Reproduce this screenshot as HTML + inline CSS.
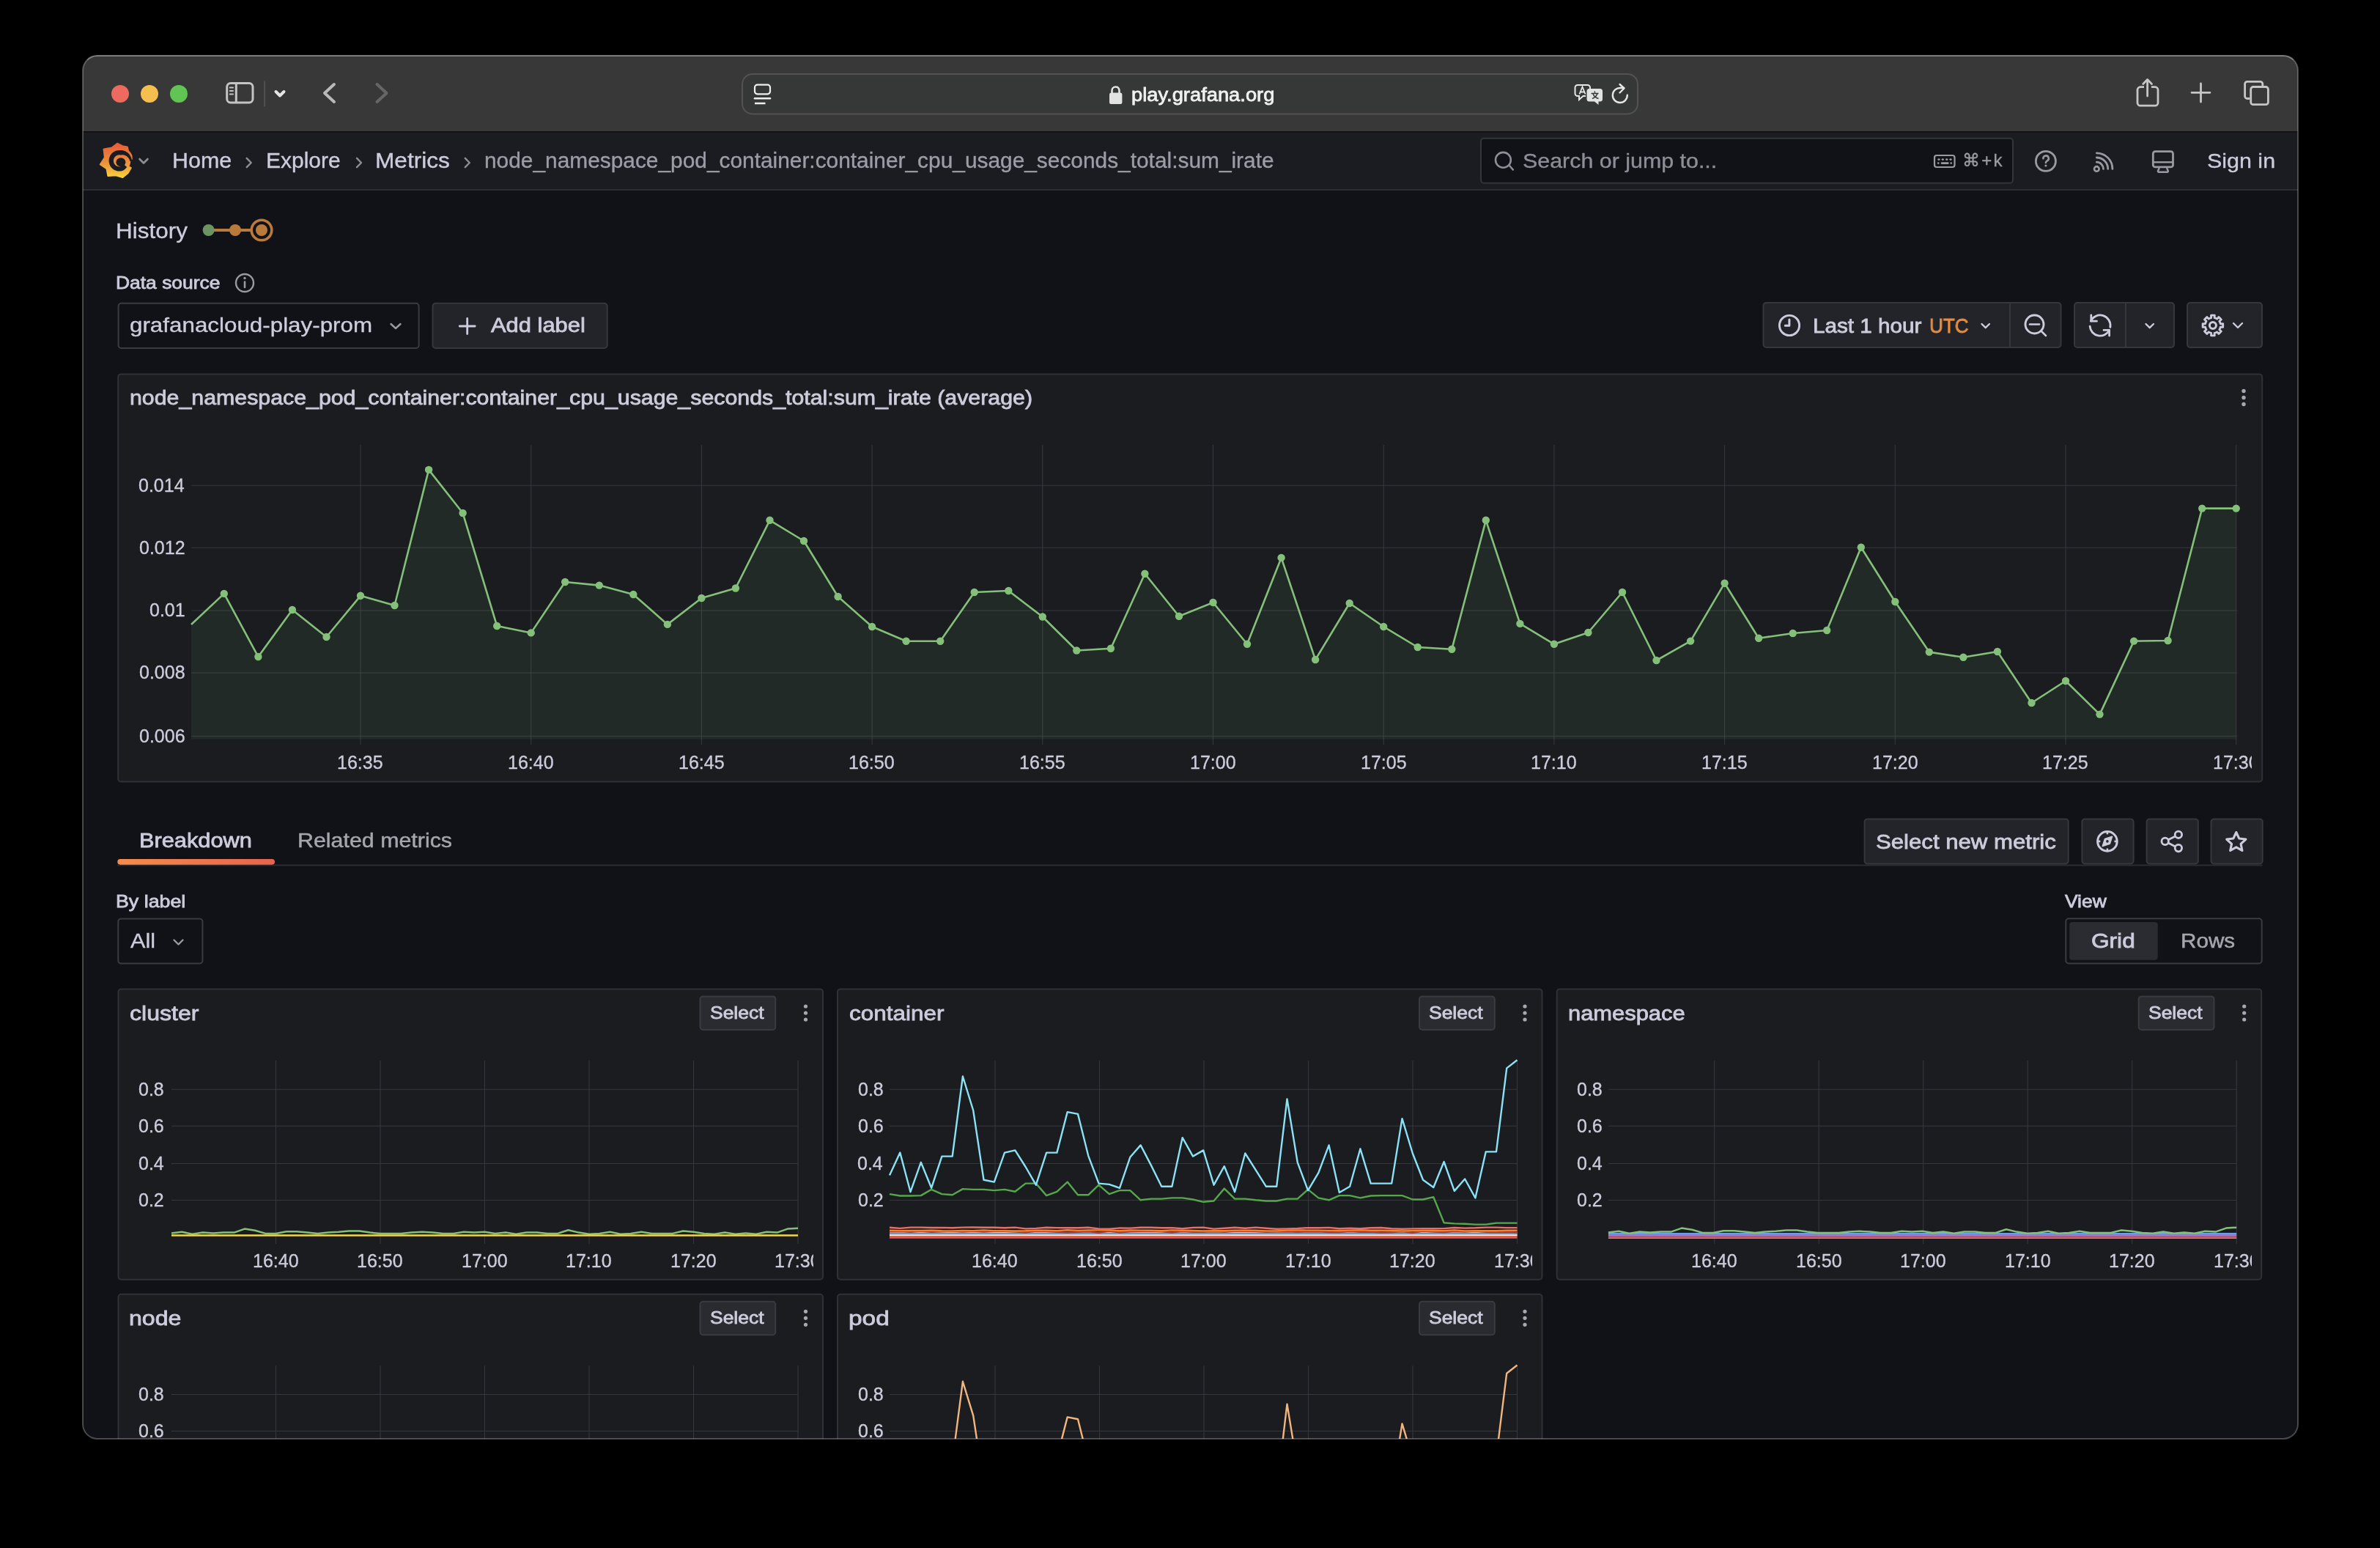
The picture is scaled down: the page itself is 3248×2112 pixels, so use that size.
<!DOCTYPE html><html><head><meta charset="utf-8"><title>Grafana</title><style>*{margin:0;padding:0;box-sizing:border-box}
html,body{width:3248px;height:2112px;background:#000;overflow:hidden;font-family:"Liberation Sans",sans-serif}
.a{position:absolute}
.t{position:absolute;white-space:nowrap;line-height:1;will-change:transform}
#win{position:absolute;left:113px;top:76px;width:3023px;height:1887px;border-radius:20px;overflow:hidden;background:#111217}
#inner{position:absolute;left:-113px;top:-76px;width:3248px;height:2112px}
</style></head><body><div id="win"><div id="inner"><div class="a" style="left:113.00px;top:76.00px;width:3023.00px;height:104.00px;background:#383838;"></div><div class="a" style="left:113.00px;top:179.30px;width:3023.00px;height:1.70px;background:#121212;"></div><div class="a" style="left:152px;top:116px;width:24px;height:24px;border-radius:50%;background:#ec6a5e"></div><div class="a" style="left:192px;top:116px;width:24px;height:24px;border-radius:50%;background:#f4bf4f"></div><div class="a" style="left:232px;top:116px;width:24px;height:24px;border-radius:50%;background:#61c554"></div><svg class="a" style="left:0;top:0" width="3248" height="200"><rect x="309.7" y="113.5" width="35.3" height="26.5" rx="5" fill="none" stroke-linecap="round" stroke-linejoin="round" stroke="#c4c4c4" stroke-width="3"/><line x1="322.3" y1="114" x2="322.3" y2="139.5" stroke="#c4c4c4" stroke-width="3"/><line x1="313.8" y1="119.4" x2="318" y2="119.4" stroke="#c4c4c4" stroke-width="2" stroke-linecap="round"/><line x1="313.8" y1="124" x2="318" y2="124" stroke="#c4c4c4" stroke-width="2" stroke-linecap="round"/><line x1="313.8" y1="128.5" x2="318" y2="128.5" stroke="#c4c4c4" stroke-width="2" stroke-linecap="round"/><line x1="361.1" y1="110.3" x2="361.1" y2="145.5" stroke="#505050" stroke-width="2"/><polyline points="376.5,125 382,130.5 387.5,125" fill="none" stroke-linecap="round" stroke-linejoin="round" stroke="#e6e6e6" stroke-width="4"/><polyline points="456,115 443,127 456,139" fill="none" stroke-linecap="round" stroke-linejoin="round" stroke="#b9b9b9" stroke-width="4"/><polyline points="514.5,115 527.5,127 514.5,139" fill="none" stroke-linecap="round" stroke-linejoin="round" stroke="#666666" stroke-width="4"/><rect x="1013" y="101" width="1222" height="54.5" rx="14" fill="#363737" stroke="#535353" stroke-width="2"/><rect x="1030" y="115.7" width="21" height="12.6" rx="3.5" fill="none" stroke-linecap="round" stroke-linejoin="round" stroke="#eeeeee" stroke-width="2.2"/><line x1="1030" y1="134.3" x2="1051" y2="134.3" stroke="#eeeeee" stroke-width="2.6" stroke-linecap="round"/><line x1="1030" y1="141" x2="1044.5" y2="141" stroke="#eeeeee" stroke-width="2.6" stroke-linecap="butt"/><path d="M1517.5 127.5 v-4 a5 5 0 0 1 10 0 v4" fill="none" stroke="#e2e2e2" stroke-width="2.6"/><rect x="1514" y="126.5" width="17.4" height="15.5" rx="2.5" fill="#e2e2e2"/><path d="M2153 116 h13.5 a3.5 3.5 0 0 1 3.5 3.5 v3 M2164 131 h-3.5 l-5.5 5 v-5 h-2 a3.5 3.5 0 0 1 -3.5 -3.5 v-8 a3.5 3.5 0 0 1 3.5 -3.5" fill="none" stroke="#e6e6e6" stroke-width="2"/><path d="M2155.5 128.5 l4 -10 l4 10 M2156.8 125.5 h5.5" fill="none" stroke="#e6e6e6" stroke-width="1.8"/><path d="M2169 121 h14.5 a3.5 3.5 0 0 1 3.5 3.5 v10.5 a3.5 3.5 0 0 1 -3.5 3.5 h-2 v4.5 l-5.5 -4.5 h-7 a3.5 3.5 0 0 1 -3.5 -3.5 v-10.5 a3.5 3.5 0 0 1 3.5 -3.5z" fill="#e2e2e2"/><path d="M2171.5 127.5 h10 M2176 124.5 l0.8 2 M2173 134.5 c3 -1 6 -4 7 -7 M2174 128 c1 3 4 5.5 7.5 6.5" fill="none" stroke="#363737" stroke-width="1.5"/><path d="M2220.8 129.8 a10 10 0 1 1 -9.2 -9.8 h4.5" fill="none" stroke="#e6e6e6" stroke-width="2.4" stroke-linecap="round"/><polyline points="2210.5,115 2216.5,120.5 2210.5,126.5" fill="none" stroke="#e6e6e6" stroke-width="2.4" stroke-linecap="round" stroke-linejoin="round"/><path d="M2926 118.7 h-5 a4 4 0 0 0 -4 4 v17.5 a4 4 0 0 0 4 4 h20 a4 4 0 0 0 4 -4 v-17.5 a4 4 0 0 0 -4 -4 h-5" fill="none" stroke="#c6c6c6" stroke-width="2.8"/><path d="M2930.6 131 v-22 M2924.7 114.5 l5.9 -6 l5.9 6" fill="none" stroke="#c6c6c6" stroke-width="2.8" stroke-linecap="round" stroke-linejoin="round"/><path d="M3003.5 114 v25 M2991 126.3 h25" fill="none" stroke="#c6c6c6" stroke-width="2.8" stroke-linecap="round"/><path d="M3070.4 134.5 h-3.5 a3.3 3.3 0 0 1 -3.3 -3.3 v-16.6 a3.3 3.3 0 0 1 3.3 -3.3 h17.6 a3.3 3.3 0 0 1 3.3 3.3 v3.5" fill="none" stroke="#c6c6c6" stroke-width="2.8"/><rect x="3071.7" y="118.5" width="23.7" height="24.2" rx="3.3" fill="none" stroke="#c6c6c6" stroke-width="2.8"/></svg><div class="t" style="left:1543.55px;top:115.77px;font-size:26.5px;color:#f0f0f0;transform:scaleX(1.0306);transform-origin:0 0;-webkit-text-stroke:0.8px #f0f0f0;">play.grafana.org</div><div class="a" style="left:113.00px;top:181.00px;width:3023.00px;height:77.00px;background:#1b1c21;"></div><div class="a" style="left:113.00px;top:257.80px;width:3023.00px;height:1.80px;background:#2c2d32;"></div><svg class="a" style="left:0;top:0" width="3248" height="270"><defs><linearGradient id="glg" x1="0" y1="0" x2="0" y2="1"><stop offset="0" stop-color="#e85c38"/><stop offset="0.55" stop-color="#eb8f3a"/><stop offset="1" stop-color="#f6d03f"/></linearGradient></defs><path d="M178.55 229.17 L174.38 236.04 L167.31 241.82 L158.36 239.09 L147.50 239.80 L145.69 230.06 L136.98 224.31 L143.10 214.83 L141.71 203.69 L152.69 201.76 L160.12 195.89 L167.02 199.42 L173.70 200.76 L174.86 206.12 L177.34 208.89 L179.19 212.12 L179.64 216.35 L179.44 217.85 L177.10 219.30 L176.88 221.77 L176.24 224.16 L175.20 226.40 L175.90 227.74 Z" fill="url(#glg)" stroke="url(#glg)" stroke-width="2.4" stroke-linejoin="round"/><path d="M173.09 227.85 L172.70 228.44 L172.28 229.01 L171.82 229.56 L171.33 230.10 L170.82 230.60 L170.27 231.09 L169.69 231.54 L169.08 231.97 L168.45 232.37 L167.79 232.74 L167.08 232.98 L166.36 233.18 L165.63 233.34 L164.89 233.46 L164.15 233.55 L163.40 233.59 L162.65 233.60 L161.90 233.57 L161.16 233.49 L160.42 233.38 L159.68 233.23 L158.96 233.05 L158.24 232.82 L157.54 232.56 L156.86 232.26 L156.19 231.93 L155.53 231.56 L154.90 231.16 L154.29 230.72 L153.71 230.25 L153.15 229.76 L152.61 229.23 L152.11 228.68 L151.63 228.10 L151.19 227.50 L150.77 226.88 L150.39 226.23 L150.05 225.57 L149.74 224.89 L149.46 224.19 L149.22 223.48 L149.02 222.76 L148.86 222.03 L148.74 221.29 L148.65 220.55 L148.61 219.80 L148.60 219.05 L148.63 218.30 L148.71 217.56 L148.82 216.82 L148.97 216.08 L149.15 215.36 L149.38 214.64 L149.64 213.94 L149.94 213.26 L150.27 212.59 L150.64 211.93 L151.04 211.30 L151.48 210.69 L151.95 210.11 L152.44 209.55 L152.97 209.01 L153.52 208.51 L154.10 208.03 L154.70 207.59 L155.32 207.17 L155.97 206.79 L156.63 206.45 L157.31 206.14 L158.01 205.86 L158.72 205.62 L159.44 205.42 L160.17 205.26 L160.91 205.14 L161.65 205.05 L162.40 205.01 L163.15 204.97 L163.91 204.91 L164.67 204.89 L165.44 204.91 L166.21 204.97 L166.98 205.07 L167.75 205.22 L168.51 205.40 L169.27 205.63 L170.02 205.90 L170.76 206.21 L171.49 206.56 L172.20 206.96 L172.90 207.39 L173.57 207.86 L174.22 208.37 L174.85 208.91 L175.45 209.50 L176.02 210.11 L176.56 210.76 L177.07 211.44 L177.55 212.15 L177.99 212.89 L178.39 213.66 L178.76 214.45 L179.08 215.27 L179.36 216.10 L179.60 216.95 L179.79 217.82 L181.85 217.97 L181.89 219.96 L176.99 219.79 L176.85 218.08 L176.51 217.39 L176.14 216.73 L175.74 216.10 L175.30 215.51 L174.85 214.95 L174.37 214.43 L173.87 213.95 L173.35 213.51 L172.81 213.11 L172.26 212.74 L171.70 212.42 L171.14 212.14 L170.57 211.90 L169.99 211.69 L169.42 211.53 L168.85 211.40 L168.28 211.32 L167.73 211.27 L167.18 211.25 L166.64 211.27 L166.12 211.33 L165.62 211.41 L165.13 211.53 L164.70 211.51 L164.29 211.42 L163.87 211.36 L163.46 211.32 L163.04 211.30 L162.62 211.30 L162.20 211.33 L161.79 211.38 L161.37 211.45 L160.96 211.54 L160.56 211.65 L160.16 211.78 L159.77 211.94 L159.39 212.11 L159.02 212.30 L158.66 212.52 L158.31 212.75 L157.97 213.00 L157.65 213.26 L157.34 213.55 L157.05 213.84 L156.77 214.16 L156.51 214.49 L156.27 214.83 L156.04 215.18 L155.84 215.54 L155.65 215.92 L155.48 216.30 L155.34 216.70 L155.21 217.09 L155.11 217.50 L155.02 217.91 L154.96 218.33 L154.92 218.74 L154.90 219.16 L154.90 219.58 L154.93 220.00 L154.98 220.41 L155.05 220.83 L155.14 221.24 L155.25 221.64 L155.38 222.04 L155.54 222.43 L155.71 222.81 L155.90 223.18 L156.12 223.54 L156.35 223.89 L156.60 224.23 L156.86 224.55 L157.15 224.86 L157.44 225.15 L157.76 225.43 L158.09 225.69 L158.43 225.93 L158.78 226.16 L159.14 226.36 L159.52 226.55 L159.90 226.72 L160.30 226.86 L160.69 226.99 L161.10 227.09 L161.51 227.18 L161.93 227.24 L162.34 227.28 L162.76 227.30 L163.18 227.30 L163.60 227.27 L164.01 227.22 L164.43 227.15 L164.84 227.06 L165.24 226.95 L165.64 226.82 L165.93 226.43 L166.19 226.04 L166.41 225.64 L166.61 225.24 L166.77 224.83 L166.90 224.42 L167.00 224.02 L167.07 223.62 L167.11 223.22 L167.11 222.84 Z" fill="#1b1c21"/><ellipse cx="164.9" cy="221.2" rx="6.5" ry="6.0" fill="#1b1c21"/><polyline points="190.5,217 196,222.5 201.5,217" fill="none" stroke="#8e8e98" stroke-width="2.6" stroke-linecap="round" stroke-linejoin="round"/><polyline points="336.7,215.8 342.7,222 336.7,228.2" fill="none" stroke="#8e8e98" stroke-width="2.4" stroke-linecap="round" stroke-linejoin="round"/><polyline points="487,215.8 493,222 487,228.2" fill="none" stroke="#8e8e98" stroke-width="2.4" stroke-linecap="round" stroke-linejoin="round"/><polyline points="634.8,215.8 640.8,222 634.8,228.2" fill="none" stroke="#8e8e98" stroke-width="2.4" stroke-linecap="round" stroke-linejoin="round"/><rect x="2021" y="188.8" width="726" height="61" rx="4" fill="#111217" stroke="#34353a" stroke-width="2"/><circle cx="2051.4" cy="218.3" r="10.4" fill="none" stroke="#8e8e98" stroke-width="2.6"/><line x1="2059.5" y1="225.5" x2="2064.8" y2="231.5" stroke="#8e8e98" stroke-width="2.6" stroke-linecap="round"/><rect x="2640" y="212" width="27.5" height="16" rx="3" fill="none" stroke="#9a9aa3" stroke-width="2.2"/><ellipse cx="2646" cy="217.6" rx="1.7" ry="1.3" fill="#9a9aa3"/><ellipse cx="2651.3" cy="217.6" rx="1.7" ry="1.3" fill="#9a9aa3"/><ellipse cx="2656.7" cy="217.6" rx="1.7" ry="1.3" fill="#9a9aa3"/><ellipse cx="2662" cy="217.6" rx="1.7" ry="1.3" fill="#9a9aa3"/><circle cx="2645.2" cy="222.6" r="1.3" fill="#9a9aa3"/><circle cx="2662.7" cy="222.6" r="1.3" fill="#9a9aa3"/><line x1="2650" y1="222.6" x2="2658.4" y2="222.6" stroke="#9a9aa3" stroke-width="2.6" stroke-linecap="round"/><circle cx="2791.9" cy="219.9" r="13.5" fill="none" stroke="#9a9aa3" stroke-width="2.8"/><path d="M2788.4 216.2 a3.7 3.7 0 1 1 5.4 3.2 c-1.2 0.7 -1.9 1.3 -1.9 2.6" fill="none" stroke="#9a9aa3" stroke-width="2.6" stroke-linecap="round"/><circle cx="2791.9" cy="226" r="1.6" fill="#9a9aa3"/><circle cx="2861.3" cy="230.4" r="3.3" fill="none" stroke="#9a9aa3" stroke-width="2.6"/><path d="M2861.3 208.8 a21.6 21.6 0 0 1 21.6 21.6 M2861.3 215 a15.4 15.4 0 0 1 15.4 15.4 M2861.3 221.2 a9.2 9.2 0 0 1 9.2 9.2" fill="none" stroke="#9a9aa3" stroke-width="2.8" stroke-linecap="round"/><rect x="2938.3" y="206.7" width="27.2" height="21.2" rx="3" fill="none" stroke="#9a9aa3" stroke-width="2.8"/><line x1="2939" y1="221.3" x2="2965" y2="221.3" stroke="#9a9aa3" stroke-width="2.4"/><path d="M2946.8 229 L2945 233.2 a1.2 1.2 0 0 0 1.1 1.6 h11.6 a1.2 1.2 0 0 0 1.1 -1.6 L2957 229" fill="none" stroke="#9a9aa3" stroke-width="2.4" stroke-linejoin="round"/></svg><div class="t" style="left:234.71px;top:204.30px;font-size:29.3px;color:#ccccdc;transform:scaleX(1.0390);transform-origin:0 0;-webkit-text-stroke:0.35px #ccccdc;">Home</div><div class="t" style="left:362.74px;top:204.30px;font-size:29.3px;color:#ccccdc;transform:scaleX(1.0241);transform-origin:0 0;-webkit-text-stroke:0.35px #ccccdc;">Explore</div><div class="t" style="left:512.01px;top:204.30px;font-size:29.3px;color:#ccccdc;transform:scaleX(1.0792);transform-origin:0 0;-webkit-text-stroke:0.35px #ccccdc;">Metrics</div><div class="t" style="left:661.26px;top:204.30px;font-size:29.3px;color:#9d9da8;transform:scaleX(1.0194);transform-origin:0 0;-webkit-text-stroke:0.35px #9d9da8;">node_namespace_pod_container:container_cpu_usage_seconds_total:sum_irate</div><div class="t" style="left:2077.61px;top:204.97px;font-size:28.5px;color:#8e8e98;transform:scaleX(1.0666);transform-origin:0 0;-webkit-text-stroke:0.35px #8e8e98;">Search or jump to...</div><div class="t" style="left:2678.20px;top:206.88px;font-size:24px;color:#9a9aa3;letter-spacing:2.2px;-webkit-text-stroke:0.35px #9a9aa3;">⌘+k</div><div class="t" style="left:3011.61px;top:204.67px;font-size:28.5px;color:#ccccdc;transform:scaleX(1.0679);transform-origin:0 0;-webkit-text-stroke:0.35px #ccccdc;">Sign in</div><svg class="a" style="left:0;top:0" width="3248" height="500"><line x1="288" y1="314" x2="345" y2="314" stroke="#b97a3b" stroke-width="4"/><circle cx="284.6" cy="314" r="8" fill="#6b9460"/><circle cx="321" cy="314" r="8" fill="#b97a3b"/><circle cx="357" cy="314" r="13.8" fill="#111217" stroke="#b97a3b" stroke-width="3.6"/><circle cx="357" cy="314" r="8" fill="#b97a3b"/><circle cx="334" cy="386" r="12" fill="none" stroke="#9a9aa3" stroke-width="2.4"/><line x1="334" y1="384.5" x2="334" y2="392" stroke="#9a9aa3" stroke-width="2.6" stroke-linecap="round"/><circle cx="334" cy="379.5" r="1.7" fill="#9a9aa3"/><rect x="161.6" y="413.8" width="410" height="61.2" rx="4" fill="#111217" stroke="#3a3b41" stroke-width="2"/><polyline points="533.5,442 540,448 546.5,442" fill="none" stroke="#9a9aa3" stroke-width="2.4" stroke-linecap="round" stroke-linejoin="round"/><rect x="590.5" y="413.8" width="238.2" height="61.2" rx="4" fill="#232429" stroke="#36373c" stroke-width="2"/><path d="M637.7 434.5 v21 M627.2 445 h21" stroke="#ccccdc" stroke-width="2.8" stroke-linecap="round"/><rect x="2406.5" y="413" width="406" height="61" rx="4" fill="#232429" stroke="#36373c" stroke-width="2"/><line x1="2743" y1="414" x2="2743" y2="474" stroke="#36373c" stroke-width="2"/><circle cx="2442" cy="444" r="13.6" fill="none" stroke="#ccccdc" stroke-width="2.9"/><polyline points="2441.9,436 2441.9,444.2 2436.3,444.2" fill="none" stroke="#ccccdc" stroke-width="3" stroke-linecap="round" stroke-linejoin="round"/><polyline points="2704.5,442 2709.7,447.2 2714.9,442" fill="none" stroke="#ccccdc" stroke-width="2.4" stroke-linecap="round" stroke-linejoin="round"/><circle cx="2776.5" cy="442.5" r="12.5" fill="none" stroke="#ccccdc" stroke-width="2.9"/><line x1="2770" y1="442.5" x2="2783" y2="442.5" stroke="#ccccdc" stroke-width="2.6" stroke-linecap="round"/><line x1="2786" y1="452" x2="2792" y2="458" stroke="#ccccdc" stroke-width="2.6" stroke-linecap="round"/><rect x="2831" y="413" width="136" height="61" rx="4" fill="#232429" stroke="#36373c" stroke-width="2"/><line x1="2901" y1="414" x2="2901" y2="474" stroke="#36373c" stroke-width="2"/><path d="M2853.3 438.1 A14 14 0 0 1 2879.8 446.4 M2852.1 445.2 A14 14 0 0 0 2878.6 450.4" fill="none" stroke="#ccccdc" stroke-width="2.8" stroke-linecap="round"/><polyline points="2853.8,430 2853.8,438.2 2861.5,438.2" fill="none" stroke="#ccccdc" stroke-width="2.8" stroke-linecap="round" stroke-linejoin="round"/><polyline points="2871,450.4 2878.6,450.4 2878.6,458" fill="none" stroke="#ccccdc" stroke-width="2.8" stroke-linecap="round" stroke-linejoin="round"/><polyline points="2928.5,442 2933.7,447.2 2938.9,442" fill="none" stroke="#ccccdc" stroke-width="2.4" stroke-linecap="round" stroke-linejoin="round"/><rect x="2985" y="413" width="102" height="61" rx="4" fill="#232429" stroke="#36373c" stroke-width="2"/><polygon points="3029.95,440.64 3030.27,441.80 3033.69,441.57 3033.69,446.43 3030.27,446.20 3029.95,447.36 3029.39,448.73 3028.79,449.77 3031.37,452.03 3027.93,455.47 3025.67,452.89 3024.63,453.49 3023.26,454.05 3022.10,454.37 3022.33,457.79 3017.47,457.79 3017.70,454.37 3016.54,454.05 3015.17,453.49 3014.13,452.89 3011.87,455.47 3008.43,452.03 3011.01,449.77 3010.41,448.73 3009.85,447.36 3009.53,446.20 3006.11,446.43 3006.11,441.57 3009.53,441.80 3009.85,440.64 3010.41,439.27 3011.01,438.23 3008.43,435.97 3011.87,432.53 3014.13,435.11 3015.17,434.51 3016.54,433.95 3017.70,433.63 3017.47,430.21 3022.33,430.21 3022.10,433.63 3023.26,433.95 3024.63,434.51 3025.67,435.11 3027.93,432.53 3031.37,435.97 3028.79,438.23 3029.39,439.27" fill="none" stroke="#ccccdc" stroke-width="2.8" stroke-linejoin="round"/><circle cx="3019.9" cy="444" r="4.5" fill="none" stroke="#ccccdc" stroke-width="3"/><polyline points="3048,441 3054,447 3060,441" fill="none" stroke="#ccccdc" stroke-width="2.4" stroke-linecap="round" stroke-linejoin="round"/></svg><div class="t" style="left:157.98px;top:300.00px;font-size:30px;color:#ccccdc;transform:scaleX(1.0486);transform-origin:0 0;-webkit-text-stroke:0.35px #ccccdc;">History</div><div class="t" style="left:158.40px;top:373.68px;font-size:24px;color:#ccccdc;transform:scaleX(1.1006);transform-origin:0 0;-webkit-text-stroke:0.8px #ccccdc;">Data source</div><div class="t" style="left:177.06px;top:430.30px;font-size:28px;color:#ccccdc;transform:scaleX(1.1196);transform-origin:0 0;-webkit-text-stroke:0.35px #ccccdc;">grafanacloud-play-prom</div><div class="t" style="left:669.89px;top:430.30px;font-size:28px;color:#ccccdc;transform:scaleX(1.1029);transform-origin:0 0;-webkit-text-stroke:0.8px #ccccdc;">Add label</div><div class="t" style="left:2473.56px;top:430.70px;font-size:28px;color:#ccccdc;transform:scaleX(1.0590);transform-origin:0 0;-webkit-text-stroke:0.8px #ccccdc;">Last 1 hour</div><div class="t" style="left:2632.55px;top:430.70px;font-size:28px;color:#e88e3c;transform:scaleX(0.9316);transform-origin:0 0;-webkit-text-stroke:0.8px #e88e3c;">UTC</div><svg class="a" style="left:0;top:0" width="3248" height="1100"><rect x="161.2" y="510.4" width="2926" height="556" rx="4" fill="#1a1c20" stroke="#303137" stroke-width="2"/><line x1="261" y1="662.2" x2="3053.6" y2="662.2" stroke="#36373c" stroke-width="1.1"/><line x1="261" y1="747.3" x2="3053.6" y2="747.3" stroke="#36373c" stroke-width="1.1"/><line x1="261" y1="833" x2="3053.6" y2="833" stroke="#36373c" stroke-width="1.1"/><line x1="261" y1="918" x2="3053.6" y2="918" stroke="#36373c" stroke-width="1.1"/><line x1="261" y1="1004.3" x2="3053.6" y2="1004.3" stroke="#36373c" stroke-width="1.1"/><line x1="492.0" y1="607" x2="492.0" y2="1016" stroke="#36373c" stroke-width="1.1"/><line x1="724.7" y1="607" x2="724.7" y2="1016" stroke="#36373c" stroke-width="1.1"/><line x1="957.4" y1="607" x2="957.4" y2="1016" stroke="#36373c" stroke-width="1.1"/><line x1="1190.1" y1="607" x2="1190.1" y2="1016" stroke="#36373c" stroke-width="1.1"/><line x1="1422.8" y1="607" x2="1422.8" y2="1016" stroke="#36373c" stroke-width="1.1"/><line x1="1655.5" y1="607" x2="1655.5" y2="1016" stroke="#36373c" stroke-width="1.1"/><line x1="1888.2" y1="607" x2="1888.2" y2="1016" stroke="#36373c" stroke-width="1.1"/><line x1="2120.9" y1="607" x2="2120.9" y2="1016" stroke="#36373c" stroke-width="1.1"/><line x1="2353.6" y1="607" x2="2353.6" y2="1016" stroke="#36373c" stroke-width="1.1"/><line x1="2586.3" y1="607" x2="2586.3" y2="1016" stroke="#36373c" stroke-width="1.1"/><line x1="2819.0" y1="607" x2="2819.0" y2="1016" stroke="#36373c" stroke-width="1.1"/><line x1="3051.7" y1="607" x2="3051.7" y2="1016" stroke="#36373c" stroke-width="1.1"/><path d="M261.0 852.0 L305.8 809.9 L352.4 896.0 L398.9 832.0 L445.5 869.0 L492.0 812.8 L538.5 826.0 L585.1 640.9 L631.6 700.0 L678.2 854.0 L724.7 863.4 L771.2 794.0 L817.8 798.6 L864.3 811.0 L910.9 851.9 L957.4 816.0 L1003.9 802.5 L1050.5 709.8 L1097.0 738.0 L1143.6 814.0 L1190.1 855.0 L1236.6 874.7 L1283.2 874.7 L1329.7 808.0 L1376.3 806.0 L1422.8 841.5 L1469.3 887.5 L1515.9 884.8 L1562.4 782.7 L1609.0 840.8 L1655.5 822.0 L1702.0 878.8 L1748.6 760.9 L1795.1 900.0 L1841.7 823.0 L1888.2 855.0 L1934.7 883.0 L1981.3 885.8 L2027.8 709.8 L2074.4 850.9 L2120.9 878.8 L2167.4 863.0 L2214.0 808.0 L2260.5 901.0 L2307.1 874.6 L2353.6 795.7 L2400.1 870.7 L2446.7 864.0 L2493.2 860.0 L2539.8 746.8 L2586.3 821.0 L2632.8 889.6 L2679.4 896.8 L2725.9 889.0 L2772.5 959.0 L2819.0 929.0 L2865.5 974.6 L2912.1 874.6 L2958.6 874.0 L3005.2 693.6 L3051.7 693.6 L3051.7 1008.4 L261 1008.4 Z" fill="#84c079" fill-opacity="0.085"/><path d="M261.0 852.0 L305.8 809.9 L352.4 896.0 L398.9 832.0 L445.5 869.0 L492.0 812.8 L538.5 826.0 L585.1 640.9 L631.6 700.0 L678.2 854.0 L724.7 863.4 L771.2 794.0 L817.8 798.6 L864.3 811.0 L910.9 851.9 L957.4 816.0 L1003.9 802.5 L1050.5 709.8 L1097.0 738.0 L1143.6 814.0 L1190.1 855.0 L1236.6 874.7 L1283.2 874.7 L1329.7 808.0 L1376.3 806.0 L1422.8 841.5 L1469.3 887.5 L1515.9 884.8 L1562.4 782.7 L1609.0 840.8 L1655.5 822.0 L1702.0 878.8 L1748.6 760.9 L1795.1 900.0 L1841.7 823.0 L1888.2 855.0 L1934.7 883.0 L1981.3 885.8 L2027.8 709.8 L2074.4 850.9 L2120.9 878.8 L2167.4 863.0 L2214.0 808.0 L2260.5 901.0 L2307.1 874.6 L2353.6 795.7 L2400.1 870.7 L2446.7 864.0 L2493.2 860.0 L2539.8 746.8 L2586.3 821.0 L2632.8 889.6 L2679.4 896.8 L2725.9 889.0 L2772.5 959.0 L2819.0 929.0 L2865.5 974.6 L2912.1 874.6 L2958.6 874.0 L3005.2 693.6 L3051.7 693.6" fill="none" stroke="#84c079" stroke-width="2.6" stroke-linejoin="round"/><circle cx="305.8" cy="809.9" r="5.2" fill="#84c079"/><circle cx="352.4" cy="896.0" r="5.2" fill="#84c079"/><circle cx="398.9" cy="832.0" r="5.2" fill="#84c079"/><circle cx="445.5" cy="869.0" r="5.2" fill="#84c079"/><circle cx="492.0" cy="812.8" r="5.2" fill="#84c079"/><circle cx="538.5" cy="826.0" r="5.2" fill="#84c079"/><circle cx="585.1" cy="640.9" r="5.2" fill="#84c079"/><circle cx="631.6" cy="700.0" r="5.2" fill="#84c079"/><circle cx="678.2" cy="854.0" r="5.2" fill="#84c079"/><circle cx="724.7" cy="863.4" r="5.2" fill="#84c079"/><circle cx="771.2" cy="794.0" r="5.2" fill="#84c079"/><circle cx="817.8" cy="798.6" r="5.2" fill="#84c079"/><circle cx="864.3" cy="811.0" r="5.2" fill="#84c079"/><circle cx="910.9" cy="851.9" r="5.2" fill="#84c079"/><circle cx="957.4" cy="816.0" r="5.2" fill="#84c079"/><circle cx="1003.9" cy="802.5" r="5.2" fill="#84c079"/><circle cx="1050.5" cy="709.8" r="5.2" fill="#84c079"/><circle cx="1097.0" cy="738.0" r="5.2" fill="#84c079"/><circle cx="1143.6" cy="814.0" r="5.2" fill="#84c079"/><circle cx="1190.1" cy="855.0" r="5.2" fill="#84c079"/><circle cx="1236.6" cy="874.7" r="5.2" fill="#84c079"/><circle cx="1283.2" cy="874.7" r="5.2" fill="#84c079"/><circle cx="1329.7" cy="808.0" r="5.2" fill="#84c079"/><circle cx="1376.3" cy="806.0" r="5.2" fill="#84c079"/><circle cx="1422.8" cy="841.5" r="5.2" fill="#84c079"/><circle cx="1469.3" cy="887.5" r="5.2" fill="#84c079"/><circle cx="1515.9" cy="884.8" r="5.2" fill="#84c079"/><circle cx="1562.4" cy="782.7" r="5.2" fill="#84c079"/><circle cx="1609.0" cy="840.8" r="5.2" fill="#84c079"/><circle cx="1655.5" cy="822.0" r="5.2" fill="#84c079"/><circle cx="1702.0" cy="878.8" r="5.2" fill="#84c079"/><circle cx="1748.6" cy="760.9" r="5.2" fill="#84c079"/><circle cx="1795.1" cy="900.0" r="5.2" fill="#84c079"/><circle cx="1841.7" cy="823.0" r="5.2" fill="#84c079"/><circle cx="1888.2" cy="855.0" r="5.2" fill="#84c079"/><circle cx="1934.7" cy="883.0" r="5.2" fill="#84c079"/><circle cx="1981.3" cy="885.8" r="5.2" fill="#84c079"/><circle cx="2027.8" cy="709.8" r="5.2" fill="#84c079"/><circle cx="2074.4" cy="850.9" r="5.2" fill="#84c079"/><circle cx="2120.9" cy="878.8" r="5.2" fill="#84c079"/><circle cx="2167.4" cy="863.0" r="5.2" fill="#84c079"/><circle cx="2214.0" cy="808.0" r="5.2" fill="#84c079"/><circle cx="2260.5" cy="901.0" r="5.2" fill="#84c079"/><circle cx="2307.1" cy="874.6" r="5.2" fill="#84c079"/><circle cx="2353.6" cy="795.7" r="5.2" fill="#84c079"/><circle cx="2400.1" cy="870.7" r="5.2" fill="#84c079"/><circle cx="2446.7" cy="864.0" r="5.2" fill="#84c079"/><circle cx="2493.2" cy="860.0" r="5.2" fill="#84c079"/><circle cx="2539.8" cy="746.8" r="5.2" fill="#84c079"/><circle cx="2586.3" cy="821.0" r="5.2" fill="#84c079"/><circle cx="2632.8" cy="889.6" r="5.2" fill="#84c079"/><circle cx="2679.4" cy="896.8" r="5.2" fill="#84c079"/><circle cx="2725.9" cy="889.0" r="5.2" fill="#84c079"/><circle cx="2772.5" cy="959.0" r="5.2" fill="#84c079"/><circle cx="2819.0" cy="929.0" r="5.2" fill="#84c079"/><circle cx="2865.5" cy="974.6" r="5.2" fill="#84c079"/><circle cx="2912.1" cy="874.6" r="5.2" fill="#84c079"/><circle cx="2958.6" cy="874.0" r="5.2" fill="#84c079"/><circle cx="3005.2" cy="693.6" r="5.2" fill="#84c079"/><circle cx="3051.7" cy="693.6" r="5.2" fill="#84c079"/><circle cx="3062" cy="533.5" r="2.7" fill="#a6a7b0"/><circle cx="3062" cy="542.5" r="2.7" fill="#a6a7b0"/><circle cx="3062" cy="551.5" r="2.7" fill="#a6a7b0"/></svg><div class="t" style="left:176.74px;top:528.80px;font-size:28px;color:#ccccdc;transform:scaleX(1.0827);transform-origin:0 0;-webkit-text-stroke:0.8px #ccccdc;">node_namespace_pod_container:container_cpu_usage_seconds_total:sum_irate (average)</div><div class="t" style="left:189.20px;top:649.64px;font-size:25px;color:#ccccdc;-webkit-text-stroke:0.35px #ccccdc;">0.014</div><div class="t" style="left:189.70px;top:734.74px;font-size:25px;color:#ccccdc;-webkit-text-stroke:0.35px #ccccdc;">0.012</div><div class="t" style="left:203.60px;top:820.44px;font-size:25px;color:#ccccdc;-webkit-text-stroke:0.35px #ccccdc;">0.01</div><div class="t" style="left:189.60px;top:905.44px;font-size:25px;color:#ccccdc;-webkit-text-stroke:0.35px #ccccdc;">0.008</div><div class="t" style="left:189.60px;top:991.74px;font-size:25px;color:#ccccdc;-webkit-text-stroke:0.35px #ccccdc;">0.006</div><div class="a" style="left:0;top:0;width:3072.5px;height:1100px;overflow:hidden"><div class="t" style="left:460.30px;top:1027.84px;font-size:25px;color:#ccccdc;-webkit-text-stroke:0.35px #ccccdc;">16:35</div><div class="t" style="left:693.00px;top:1027.84px;font-size:25px;color:#ccccdc;-webkit-text-stroke:0.35px #ccccdc;">16:40</div><div class="t" style="left:925.70px;top:1027.84px;font-size:25px;color:#ccccdc;-webkit-text-stroke:0.35px #ccccdc;">16:45</div><div class="t" style="left:1158.40px;top:1027.84px;font-size:25px;color:#ccccdc;-webkit-text-stroke:0.35px #ccccdc;">16:50</div><div class="t" style="left:1391.10px;top:1027.84px;font-size:25px;color:#ccccdc;-webkit-text-stroke:0.35px #ccccdc;">16:55</div><div class="t" style="left:1623.80px;top:1027.84px;font-size:25px;color:#ccccdc;-webkit-text-stroke:0.35px #ccccdc;">17:00</div><div class="t" style="left:1856.50px;top:1027.84px;font-size:25px;color:#ccccdc;-webkit-text-stroke:0.35px #ccccdc;">17:05</div><div class="t" style="left:2089.20px;top:1027.84px;font-size:25px;color:#ccccdc;-webkit-text-stroke:0.35px #ccccdc;">17:10</div><div class="t" style="left:2321.90px;top:1027.84px;font-size:25px;color:#ccccdc;-webkit-text-stroke:0.35px #ccccdc;">17:15</div><div class="t" style="left:2554.60px;top:1027.84px;font-size:25px;color:#ccccdc;-webkit-text-stroke:0.35px #ccccdc;">17:20</div><div class="t" style="left:2787.30px;top:1027.84px;font-size:25px;color:#ccccdc;-webkit-text-stroke:0.35px #ccccdc;">17:25</div><div class="t" style="left:3020.00px;top:1027.84px;font-size:25px;color:#ccccdc;-webkit-text-stroke:0.35px #ccccdc;">17:30</div></div><svg class="a" style="left:0;top:0" width="3248" height="1350"><line x1="160.3" y1="1180.5" x2="3087.5" y2="1180.5" stroke="#2b2c31" stroke-width="2"/><defs><linearGradient id="tabg" x1="0" x2="1"><stop offset="0" stop-color="#f58c4c"/><stop offset="1" stop-color="#e5644f"/></linearGradient></defs><rect x="160.3" y="1172" width="214.7" height="7.7" rx="3.85" fill="url(#tabg)"/><rect x="2544.6" y="1117.4" width="278.1" height="61" rx="4" fill="#232429" stroke="#36373c" stroke-width="2"/><rect x="2841.4" y="1117.4" width="70.2" height="61" rx="4" fill="#232429" stroke="#36373c" stroke-width="2"/><rect x="2929.6" y="1117.4" width="70.2" height="61" rx="4" fill="#232429" stroke="#36373c" stroke-width="2"/><rect x="3017.5" y="1117.4" width="70.2" height="61" rx="4" fill="#232429" stroke="#36373c" stroke-width="2"/><circle cx="2875.9" cy="1147.9" r="13.3" fill="none" stroke="#ccccdc" stroke-width="3"/><line x1="2875.9" y1="1135" x2="2875.9" y2="1138.3" stroke="#ccccdc" stroke-width="2.6"/><line x1="2875.9" y1="1157.5" x2="2875.9" y2="1160.8" stroke="#ccccdc" stroke-width="2.6"/><line x1="2863" y1="1147.9" x2="2866.3" y2="1147.9" stroke="#ccccdc" stroke-width="2.6"/><line x1="2885.5" y1="1147.9" x2="2888.8" y2="1147.9" stroke="#ccccdc" stroke-width="2.6"/><path d="M2882.5 1141.3 L2879.3 1151.3 L2869.3 1154.5 L2872.5 1144.5 Z" fill="#ccccdc" stroke="#ccccdc" stroke-width="1.6" stroke-linejoin="round"/><circle cx="2875.9" cy="1147.9" r="1.8" fill="#232429"/><circle cx="2954.7" cy="1147.9" r="4.7" fill="none" stroke="#ccccdc" stroke-width="2.8"/><circle cx="2972.9" cy="1138.8" r="4.7" fill="none" stroke="#ccccdc" stroke-width="2.8"/><circle cx="2972.9" cy="1157.1" r="4.7" fill="none" stroke="#ccccdc" stroke-width="2.8"/><path d="M2959 1145.7 l9.6 -4.8 M2959 1150.1 l9.6 4.8" stroke="#ccccdc" stroke-width="2.8"/><polygon points="3051.80,1135.50 3055.68,1143.96 3064.92,1145.04 3058.08,1151.34 3059.91,1160.46 3051.80,1155.90 3043.69,1160.46 3045.52,1151.34 3038.68,1145.04 3047.92,1143.96" fill="none" stroke="#ccccdc" stroke-width="3.1" stroke-linejoin="round"/><rect x="161.3" y="1253.4" width="115.1" height="61.2" rx="4" fill="#111217" stroke="#3a3b41" stroke-width="2"/><polyline points="237.5,1282.5 243.5,1288.5 249.5,1282.5" fill="none" stroke="#9a9aa3" stroke-width="2.4" stroke-linecap="round" stroke-linejoin="round"/><rect x="2819.3" y="1253.2" width="267.4" height="61.3" rx="4" fill="#111217" stroke="#3a3b41" stroke-width="2"/><rect x="2824.2" y="1258" width="120.5" height="51.7" rx="4" fill="#2b2c32"/></svg><div class="t" style="left:190.07px;top:1132.50px;font-size:28px;color:#ccccdc;transform:scaleX(1.0979);transform-origin:0 0;-webkit-text-stroke:0.8px #ccccdc;">Breakdown</div><div class="t" style="left:405.51px;top:1132.50px;font-size:28px;color:#a5a6ae;transform:scaleX(1.0848);transform-origin:0 0;-webkit-text-stroke:0.45px #a5a6ae;">Related metrics</div><div class="t" style="left:2560.05px;top:1135.00px;font-size:28px;color:#ccccdc;transform:scaleX(1.1124);transform-origin:0 0;-webkit-text-stroke:0.8px #ccccdc;">Select new metric</div><div class="t" style="left:158.07px;top:1217.68px;font-size:24px;color:#ccccdc;transform:scaleX(1.1163);transform-origin:0 0;-webkit-text-stroke:0.8px #ccccdc;">By label</div><div class="t" style="left:2817.69px;top:1217.68px;font-size:24px;color:#ccccdc;transform:scaleX(1.0990);transform-origin:0 0;-webkit-text-stroke:0.8px #ccccdc;">View</div><div class="t" style="left:178.39px;top:1270.10px;font-size:28px;color:#ccccdc;transform:scaleX(1.0928);transform-origin:0 0;-webkit-text-stroke:0.35px #ccccdc;">All</div><div class="t" style="left:2854.42px;top:1270.10px;font-size:28px;color:#ccccdc;transform:scaleX(1.1290);transform-origin:0 0;-webkit-text-stroke:0.8px #ccccdc;">Grid</div><div class="t" style="left:2975.57px;top:1270.10px;font-size:28px;color:#a5a6ae;transform:scaleX(1.0586);transform-origin:0 0;-webkit-text-stroke:0.5px #a5a6ae;">Rows</div><svg class="a" style="left:0;top:0" width="3248" height="2112"><rect x="161.5" y="1349.4" width="961.5" height="396.3" rx="4" fill="#1a1c20" stroke="#303137" stroke-width="2"/><rect x="955.5" y="1359.4" width="102.8" height="45.6" rx="4" fill="#2a2b30" stroke="#3a3b40" stroke-width="2"/><circle cx="1099.5" cy="1373.0" r="2.6" fill="#a6a7b0"/><circle cx="1099.5" cy="1382.0" r="2.6" fill="#a6a7b0"/><circle cx="1099.5" cy="1391.0" r="2.6" fill="#a6a7b0"/><line x1="234.0" y1="1486.2" x2="1089.0" y2="1486.2" stroke="#36373c" stroke-width="1.1"/><line x1="234.0" y1="1536.2" x2="1089.0" y2="1536.2" stroke="#36373c" stroke-width="1.1"/><line x1="234.0" y1="1587.5" x2="1089.0" y2="1587.5" stroke="#36373c" stroke-width="1.1"/><line x1="234.0" y1="1637.5" x2="1089.0" y2="1637.5" stroke="#36373c" stroke-width="1.1"/><line x1="376.5" y1="1447.0" x2="376.5" y2="1697.0" stroke="#36373c" stroke-width="1.1"/><line x1="519.0" y1="1447.0" x2="519.0" y2="1697.0" stroke="#36373c" stroke-width="1.1"/><line x1="661.5" y1="1447.0" x2="661.5" y2="1697.0" stroke="#36373c" stroke-width="1.1"/><line x1="804.0" y1="1447.0" x2="804.0" y2="1697.0" stroke="#36373c" stroke-width="1.1"/><line x1="946.5" y1="1447.0" x2="946.5" y2="1697.0" stroke="#36373c" stroke-width="1.1"/><line x1="1089.0" y1="1447.0" x2="1089.0" y2="1697.0" stroke="#36373c" stroke-width="1.1"/><path d="M234.0 1682.4 L248.2 1680.8 L262.5 1683.7 L276.8 1681.6 L291.0 1682.4 L305.2 1681.6 L319.5 1681.6 L333.8 1676.6 L348.0 1678.7 L362.2 1682.9 L376.5 1682.9 L390.8 1680.3 L405.0 1680.3 L419.2 1681.6 L433.5 1682.9 L447.8 1681.6 L462.0 1680.8 L476.2 1679.5 L490.5 1679.5 L504.8 1681.6 L519.0 1682.9 L533.2 1682.9 L547.5 1682.9 L561.8 1681.6 L576.0 1680.8 L590.2 1681.6 L604.5 1682.9 L618.8 1682.9 L633.0 1680.8 L647.2 1681.6 L661.5 1680.8 L675.8 1682.9 L690.0 1681.6 L704.2 1683.7 L718.5 1681.6 L732.8 1681.6 L747.0 1682.9 L761.2 1682.9 L775.5 1678.2 L789.8 1681.6 L804.0 1683.7 L818.2 1682.9 L832.5 1680.8 L846.8 1683.7 L861.0 1682.9 L875.2 1680.8 L889.5 1682.9 L903.8 1682.9 L918.0 1682.9 L932.2 1679.5 L946.5 1680.8 L960.8 1682.9 L975.0 1683.7 L989.2 1681.6 L1003.5 1683.7 L1017.8 1682.4 L1032.0 1683.7 L1046.2 1680.8 L1060.5 1681.6 L1074.8 1676.6 L1089.0 1675.7" fill="none" stroke="#84c079" stroke-width="2.5" stroke-linejoin="round"/><path d="M234.0 1685.6 L248.2 1685.6 L262.5 1685.6 L276.8 1685.6 L291.0 1685.6 L305.2 1685.6 L319.5 1685.6 L333.8 1685.6 L348.0 1685.6 L362.2 1685.6 L376.5 1685.6 L390.8 1685.6 L405.0 1685.6 L419.2 1685.6 L433.5 1685.6 L447.8 1685.6 L462.0 1685.6 L476.2 1685.6 L490.5 1685.6 L504.8 1685.6 L519.0 1685.6 L533.2 1685.6 L547.5 1685.6 L561.8 1685.6 L576.0 1685.6 L590.2 1685.6 L604.5 1685.6 L618.8 1685.6 L633.0 1685.6 L647.2 1685.6 L661.5 1685.6 L675.8 1685.6 L690.0 1685.6 L704.2 1685.6 L718.5 1685.6 L732.8 1685.6 L747.0 1685.6 L761.2 1685.6 L775.5 1685.6 L789.8 1685.6 L804.0 1685.6 L818.2 1685.6 L832.5 1685.6 L846.8 1685.6 L861.0 1685.6 L875.2 1685.6 L889.5 1685.6 L903.8 1685.6 L918.0 1685.6 L932.2 1685.6 L946.5 1685.6 L960.8 1685.6 L975.0 1685.6 L989.2 1685.6 L1003.5 1685.6 L1017.8 1685.6 L1032.0 1685.6 L1046.2 1685.6 L1060.5 1685.6 L1074.8 1685.6 L1089.0 1685.6" fill="none" stroke="#f5d64a" stroke-width="2.5" stroke-linejoin="round"/></svg><div class="t" style="left:177.13px;top:1368.70px;font-size:28px;color:#ccccdc;transform:scaleX(1.1450);transform-origin:0 0;-webkit-text-stroke:0.8px #ccccdc;">cluster</div><div class="t" style="left:968.79px;top:1370.08px;font-size:24px;color:#ccccdc;transform:scaleX(1.1026);transform-origin:0 0;-webkit-text-stroke:0.8px #ccccdc;">Select</div><div class="t" style="left:189.00px;top:1473.64px;font-size:25px;color:#ccccdc;-webkit-text-stroke:0.35px #ccccdc;">0.8</div><div class="t" style="left:189.00px;top:1523.64px;font-size:25px;color:#ccccdc;-webkit-text-stroke:0.35px #ccccdc;">0.6</div><div class="t" style="left:188.60px;top:1574.94px;font-size:25px;color:#ccccdc;-webkit-text-stroke:0.35px #ccccdc;">0.4</div><div class="t" style="left:189.10px;top:1624.94px;font-size:25px;color:#ccccdc;-webkit-text-stroke:0.35px #ccccdc;">0.2</div><div class="a" style="left:0;top:0;width:1109.5px;height:2112px;overflow:hidden"><div class="t" style="left:344.80px;top:1708.24px;font-size:25px;color:#ccccdc;-webkit-text-stroke:0.35px #ccccdc;">16:40</div><div class="t" style="left:487.30px;top:1708.24px;font-size:25px;color:#ccccdc;-webkit-text-stroke:0.35px #ccccdc;">16:50</div><div class="t" style="left:629.80px;top:1708.24px;font-size:25px;color:#ccccdc;-webkit-text-stroke:0.35px #ccccdc;">17:00</div><div class="t" style="left:772.30px;top:1708.24px;font-size:25px;color:#ccccdc;-webkit-text-stroke:0.35px #ccccdc;">17:10</div><div class="t" style="left:914.80px;top:1708.24px;font-size:25px;color:#ccccdc;-webkit-text-stroke:0.35px #ccccdc;">17:20</div><div class="t" style="left:1057.30px;top:1708.24px;font-size:25px;color:#ccccdc;-webkit-text-stroke:0.35px #ccccdc;">17:30</div></div><svg class="a" style="left:0;top:0" width="3248" height="2112"><rect x="1143" y="1349.4" width="961.5" height="396.3" rx="4" fill="#1a1c20" stroke="#303137" stroke-width="2"/><rect x="1937" y="1359.4" width="102.8" height="45.6" rx="4" fill="#2a2b30" stroke="#3a3b40" stroke-width="2"/><circle cx="2081" cy="1373.0" r="2.6" fill="#a6a7b0"/><circle cx="2081" cy="1382.0" r="2.6" fill="#a6a7b0"/><circle cx="2081" cy="1391.0" r="2.6" fill="#a6a7b0"/><line x1="1214" y1="1486.2" x2="2070.5" y2="1486.2" stroke="#36373c" stroke-width="1.1"/><line x1="1214" y1="1536.2" x2="2070.5" y2="1536.2" stroke="#36373c" stroke-width="1.1"/><line x1="1214" y1="1587.5" x2="2070.5" y2="1587.5" stroke="#36373c" stroke-width="1.1"/><line x1="1214" y1="1637.5" x2="2070.5" y2="1637.5" stroke="#36373c" stroke-width="1.1"/><line x1="1358.0" y1="1447.0" x2="1358.0" y2="1697.0" stroke="#36373c" stroke-width="1.1"/><line x1="1500.5" y1="1447.0" x2="1500.5" y2="1697.0" stroke="#36373c" stroke-width="1.1"/><line x1="1643.0" y1="1447.0" x2="1643.0" y2="1697.0" stroke="#36373c" stroke-width="1.1"/><line x1="1785.5" y1="1447.0" x2="1785.5" y2="1697.0" stroke="#36373c" stroke-width="1.1"/><line x1="1928.0" y1="1447.0" x2="1928.0" y2="1697.0" stroke="#36373c" stroke-width="1.1"/><line x1="2070.5" y1="1447.0" x2="2070.5" y2="1697.0" stroke="#36373c" stroke-width="1.1"/><path d="M1214.0 1688.1 L1228.3 1688.1 L1242.5 1688.1 L1256.8 1688.1 L1271.1 1688.1 L1285.4 1688.1 L1299.7 1688.1 L1313.9 1688.1 L1328.2 1688.1 L1342.5 1688.1 L1356.8 1688.1 L1371.0 1688.1 L1385.3 1688.1 L1399.6 1688.1 L1413.8 1688.1 L1428.1 1688.1 L1442.4 1688.1 L1456.7 1688.1 L1471.0 1688.1 L1485.2 1688.1 L1499.5 1688.1 L1513.8 1688.1 L1528.0 1688.1 L1542.3 1688.1 L1556.6 1688.1 L1570.9 1688.1 L1585.2 1688.1 L1599.4 1688.1 L1613.7 1688.1 L1628.0 1688.1 L1642.2 1688.1 L1656.5 1688.1 L1670.8 1688.1 L1685.1 1688.1 L1699.3 1688.1 L1713.6 1688.1 L1727.9 1688.1 L1742.2 1688.1 L1756.5 1688.1 L1770.7 1688.1 L1785.0 1688.1 L1799.3 1688.1 L1813.6 1688.1 L1827.8 1688.1 L1842.1 1688.1 L1856.4 1688.1 L1870.7 1688.1 L1884.9 1688.1 L1899.2 1688.1 L1913.5 1688.1 L1927.8 1688.1 L1942.0 1688.1 L1956.3 1688.1 L1970.6 1688.1 L1984.8 1688.1 L1999.1 1688.1 L2013.4 1688.1 L2027.7 1688.1 L2042.0 1688.1 L2056.2 1688.1 L2070.5 1688.1" fill="none" stroke="#e8505f" stroke-width="3.2" stroke-linejoin="round"/><path d="M1214.0 1686.1 L1228.3 1686.1 L1242.5 1686.1 L1256.8 1686.1 L1271.1 1686.1 L1285.4 1686.1 L1299.7 1686.1 L1313.9 1686.1 L1328.2 1686.1 L1342.5 1686.1 L1356.8 1686.1 L1371.0 1686.1 L1385.3 1686.1 L1399.6 1686.1 L1413.8 1686.1 L1428.1 1686.1 L1442.4 1686.1 L1456.7 1686.1 L1471.0 1686.1 L1485.2 1686.1 L1499.5 1686.1 L1513.8 1686.1 L1528.0 1686.1 L1542.3 1686.1 L1556.6 1686.1 L1570.9 1686.1 L1585.2 1686.1 L1599.4 1686.1 L1613.7 1686.1 L1628.0 1686.1 L1642.2 1686.1 L1656.5 1686.1 L1670.8 1686.1 L1685.1 1686.1 L1699.3 1686.1 L1713.6 1686.1 L1727.9 1686.1 L1742.2 1686.1 L1756.5 1686.1 L1770.7 1686.1 L1785.0 1686.1 L1799.3 1686.1 L1813.6 1686.1 L1827.8 1686.1 L1842.1 1686.1 L1856.4 1686.1 L1870.7 1686.1 L1884.9 1686.1 L1899.2 1686.1 L1913.5 1686.1 L1927.8 1686.1 L1942.0 1686.1 L1956.3 1686.1 L1970.6 1686.1 L1984.8 1686.1 L1999.1 1686.1 L2013.4 1686.1 L2027.7 1686.1 L2042.0 1686.1 L2056.2 1686.1 L2070.5 1686.1" fill="none" stroke="#f08a3c" stroke-width="1.5" stroke-linejoin="round"/><path d="M1214.0 1684.9 L1228.3 1684.9 L1242.5 1684.9 L1256.8 1684.9 L1271.1 1684.9 L1285.4 1684.9 L1299.7 1684.9 L1313.9 1684.9 L1328.2 1684.9 L1342.5 1684.9 L1356.8 1684.9 L1371.0 1684.9 L1385.3 1684.9 L1399.6 1684.9 L1413.8 1684.9 L1428.1 1684.9 L1442.4 1684.9 L1456.7 1684.9 L1471.0 1684.9 L1485.2 1684.9 L1499.5 1684.9 L1513.8 1684.9 L1528.0 1684.9 L1542.3 1684.9 L1556.6 1684.9 L1570.9 1684.9 L1585.2 1684.9 L1599.4 1684.9 L1613.7 1684.9 L1628.0 1684.9 L1642.2 1684.9 L1656.5 1684.9 L1670.8 1684.9 L1685.1 1684.9 L1699.3 1684.9 L1713.6 1684.9 L1727.9 1684.9 L1742.2 1684.9 L1756.5 1684.9 L1770.7 1684.9 L1785.0 1684.9 L1799.3 1684.9 L1813.6 1684.9 L1827.8 1684.9 L1842.1 1684.9 L1856.4 1684.9 L1870.7 1684.9 L1884.9 1684.9 L1899.2 1684.9 L1913.5 1684.9 L1927.8 1684.9 L1942.0 1684.9 L1956.3 1684.9 L1970.6 1684.9 L1984.8 1684.9 L1999.1 1684.9 L2013.4 1684.9 L2027.7 1684.9 L2042.0 1684.9 L2056.2 1684.9 L2070.5 1684.9" fill="none" stroke="#e8f6f8" stroke-width="2.2" stroke-linejoin="round"/><path d="M1214.0 1683.7 L1228.3 1683.7 L1242.5 1683.7 L1256.8 1683.7 L1271.1 1683.7 L1285.4 1683.7 L1299.7 1683.7 L1313.9 1683.7 L1328.2 1683.7 L1342.5 1683.7 L1356.8 1683.7 L1371.0 1683.7 L1385.3 1683.7 L1399.6 1683.7 L1413.8 1683.7 L1428.1 1683.7 L1442.4 1683.7 L1456.7 1683.7 L1471.0 1683.7 L1485.2 1683.7 L1499.5 1683.7 L1513.8 1683.7 L1528.0 1683.7 L1542.3 1683.7 L1556.6 1683.7 L1570.9 1683.7 L1585.2 1683.7 L1599.4 1683.7 L1613.7 1683.7 L1628.0 1683.7 L1642.2 1683.7 L1656.5 1683.7 L1670.8 1683.7 L1685.1 1683.7 L1699.3 1683.7 L1713.6 1683.7 L1727.9 1683.7 L1742.2 1683.7 L1756.5 1683.7 L1770.7 1683.7 L1785.0 1683.7 L1799.3 1683.7 L1813.6 1683.7 L1827.8 1683.7 L1842.1 1683.7 L1856.4 1683.7 L1870.7 1683.7 L1884.9 1683.7 L1899.2 1683.7 L1913.5 1683.7 L1927.8 1683.7 L1942.0 1683.7 L1956.3 1683.7 L1970.6 1683.7 L1984.8 1683.7 L1999.1 1683.7 L2013.4 1683.7 L2027.7 1683.7 L2042.0 1683.7 L2056.2 1683.7 L2070.5 1683.7" fill="none" stroke="#a070c8" stroke-width="1.2" stroke-linejoin="round"/><path d="M1214.0 1682.7 L1228.3 1682.7 L1242.5 1682.7 L1256.8 1682.7 L1271.1 1682.7 L1285.4 1682.7 L1299.7 1682.7 L1313.9 1682.7 L1328.2 1682.7 L1342.5 1682.7 L1356.8 1682.7 L1371.0 1682.7 L1385.3 1682.7 L1399.6 1682.7 L1413.8 1682.7 L1428.1 1682.7 L1442.4 1682.7 L1456.7 1682.7 L1471.0 1682.7 L1485.2 1682.7 L1499.5 1682.7 L1513.8 1682.7 L1528.0 1682.7 L1542.3 1682.7 L1556.6 1682.7 L1570.9 1682.7 L1585.2 1682.7 L1599.4 1682.7 L1613.7 1682.7 L1628.0 1682.7 L1642.2 1682.7 L1656.5 1682.7 L1670.8 1682.7 L1685.1 1682.7 L1699.3 1682.7 L1713.6 1682.7 L1727.9 1682.7 L1742.2 1682.7 L1756.5 1682.7 L1770.7 1682.7 L1785.0 1682.7 L1799.3 1682.7 L1813.6 1682.7 L1827.8 1682.7 L1842.1 1682.7 L1856.4 1682.7 L1870.7 1682.7 L1884.9 1682.7 L1899.2 1682.7 L1913.5 1682.7 L1927.8 1682.7 L1942.0 1682.7 L1956.3 1682.7 L1970.6 1682.7 L1984.8 1682.7 L1999.1 1682.7 L2013.4 1682.7 L2027.7 1682.7 L2042.0 1682.7 L2056.2 1682.7 L2070.5 1682.7" fill="none" stroke="#5b8fd6" stroke-width="2.2" stroke-linejoin="round"/><path d="M1214.0 1681.6 L1228.3 1681.6 L1242.5 1681.6 L1256.8 1681.6 L1271.1 1681.6 L1285.4 1681.6 L1299.7 1681.6 L1313.9 1681.6 L1328.2 1681.6 L1342.5 1681.6 L1356.8 1681.6 L1371.0 1681.6 L1385.3 1681.6 L1399.6 1681.6 L1413.8 1681.6 L1428.1 1681.6 L1442.4 1681.6 L1456.7 1681.6 L1471.0 1681.6 L1485.2 1681.6 L1499.5 1681.6 L1513.8 1681.6 L1528.0 1681.6 L1542.3 1681.6 L1556.6 1681.6 L1570.9 1681.6 L1585.2 1681.6 L1599.4 1681.6 L1613.7 1681.6 L1628.0 1681.6 L1642.2 1681.6 L1656.5 1681.6 L1670.8 1681.6 L1685.1 1681.6 L1699.3 1681.6 L1713.6 1681.6 L1727.9 1681.6 L1742.2 1681.6 L1756.5 1681.6 L1770.7 1681.6 L1785.0 1681.6 L1799.3 1681.6 L1813.6 1681.6 L1827.8 1681.6 L1842.1 1681.6 L1856.4 1681.6 L1870.7 1681.6 L1884.9 1681.6 L1899.2 1681.6 L1913.5 1681.6 L1927.8 1681.6 L1942.0 1681.6 L1956.3 1681.6 L1970.6 1681.6 L1984.8 1681.6 L1999.1 1681.6 L2013.4 1681.6 L2027.7 1681.6 L2042.0 1681.6 L2056.2 1681.6 L2070.5 1681.6" fill="none" stroke="#c8e0a0" stroke-width="1.2" stroke-linejoin="round"/><path d="M1214.0 1680.4 L1228.3 1680.1 L1242.5 1681.0 L1256.8 1679.9 L1271.1 1680.8 L1285.4 1680.5 L1299.7 1679.9 L1313.9 1680.7 L1328.2 1679.9 L1342.5 1680.6 L1356.8 1679.9 L1371.0 1680.0 L1385.3 1680.6 L1399.6 1681.3 L1413.8 1680.0 L1428.1 1680.2 L1442.4 1680.9 L1456.7 1681.5 L1471.0 1680.8 L1485.2 1680.5 L1499.5 1681.6 L1513.8 1679.9 L1528.0 1681.3 L1542.3 1680.3 L1556.6 1680.1 L1570.9 1680.0 L1585.2 1680.4 L1599.4 1681.3 L1613.7 1680.1 L1628.0 1680.8 L1642.2 1681.0 L1656.5 1680.5 L1670.8 1680.8 L1685.1 1679.9 L1699.3 1679.9 L1713.6 1680.2 L1727.9 1681.0 L1742.2 1680.6 L1756.5 1680.4 L1770.7 1680.9 L1785.0 1680.6 L1799.3 1680.3 L1813.6 1681.2 L1827.8 1681.1 L1842.1 1680.2 L1856.4 1680.8 L1870.7 1680.7 L1884.9 1681.4 L1899.2 1681.1 L1913.5 1680.3 L1927.8 1681.6 L1942.0 1680.0 L1956.3 1680.6 L1970.6 1681.2 L1984.8 1680.1 L1999.1 1680.7 L2013.4 1679.9 L2027.7 1681.0 L2042.0 1681.2 L2056.2 1680.8 L2070.5 1681.4" fill="none" stroke="#b8321c" stroke-width="2.2" stroke-linejoin="round"/><path d="M1214.0 1678.7 L1228.3 1679.1 L1242.5 1679.0 L1256.8 1679.0 L1271.1 1678.8 L1285.4 1679.3 L1299.7 1679.4 L1313.9 1678.9 L1328.2 1679.1 L1342.5 1678.4 L1356.8 1679.1 L1371.0 1679.1 L1385.3 1679.5 L1399.6 1679.3 L1413.8 1678.6 L1428.1 1678.8 L1442.4 1679.1 L1456.7 1678.3 L1471.0 1678.9 L1485.2 1678.5 L1499.5 1678.4 L1513.8 1678.4 L1528.0 1679.2 L1542.3 1678.5 L1556.6 1678.6 L1570.9 1678.8 L1585.2 1679.3 L1599.4 1678.4 L1613.7 1678.8 L1628.0 1679.0 L1642.2 1679.4 L1656.5 1679.3 L1670.8 1679.3 L1685.1 1678.6 L1699.3 1678.8 L1713.6 1678.7 L1727.9 1679.4 L1742.2 1679.4 L1756.5 1678.5 L1770.7 1678.5 L1785.0 1678.6 L1799.3 1678.6 L1813.6 1678.9 L1827.8 1679.0 L1842.1 1678.6 L1856.4 1678.3 L1870.7 1678.8 L1884.9 1678.7 L1899.2 1679.0 L1913.5 1679.4 L1927.8 1679.1 L1942.0 1678.9 L1956.3 1679.0 L1970.6 1679.1 L1984.8 1678.4 L1999.1 1679.4 L2013.4 1679.2 L2027.7 1679.3 L2042.0 1679.3 L2056.2 1678.8 L2070.5 1678.8" fill="none" stroke="#f2852c" stroke-width="2.4" stroke-linejoin="round"/><path d="M1214.0 1674.7 L1228.3 1675.9 L1242.5 1674.6 L1256.8 1674.6 L1271.1 1675.0 L1285.4 1674.9 L1299.7 1675.2 L1313.9 1674.6 L1328.2 1674.5 L1342.5 1674.8 L1356.8 1674.7 L1371.0 1675.3 L1385.3 1674.6 L1399.6 1676.4 L1413.8 1675.9 L1428.1 1674.8 L1442.4 1675.1 L1456.7 1675.3 L1471.0 1675.3 L1485.2 1674.8 L1499.5 1676.4 L1513.8 1676.7 L1528.0 1675.5 L1542.3 1675.6 L1556.6 1674.7 L1570.9 1674.7 L1585.2 1675.3 L1599.4 1675.1 L1613.7 1676.3 L1628.0 1674.9 L1642.2 1674.6 L1656.5 1676.6 L1670.8 1675.7 L1685.1 1674.8 L1699.3 1675.7 L1713.6 1674.6 L1727.9 1675.7 L1742.2 1676.7 L1756.5 1676.4 L1770.7 1676.0 L1785.0 1675.1 L1799.3 1675.3 L1813.6 1674.9 L1827.8 1676.2 L1842.1 1675.7 L1856.4 1676.2 L1870.7 1675.2 L1884.9 1675.0 L1899.2 1676.3 L1913.5 1676.7 L1927.8 1676.4 L1942.0 1676.3 L1956.3 1676.3 L1970.6 1676.1 L1984.8 1675.0 L1999.1 1675.6 L2013.4 1675.3 L2027.7 1674.6 L2042.0 1674.6 L2056.2 1675.1 L2070.5 1675.1" fill="none" stroke="#e8706a" stroke-width="2.4" stroke-linejoin="round"/><path d="M1214.0 1629.1 L1228.3 1631.5 L1242.5 1631.5 L1256.8 1631.1 L1271.1 1622.9 L1285.4 1629.1 L1299.7 1630.3 L1313.9 1622.1 L1328.2 1622.9 L1342.5 1622.9 L1356.8 1624.1 L1371.0 1622.9 L1385.3 1625.8 L1399.6 1614.6 L1413.8 1614.6 L1428.1 1631.1 L1442.4 1625.8 L1456.7 1612.6 L1471.0 1630.3 L1485.2 1630.3 L1499.5 1616.7 L1513.8 1629.1 L1528.0 1624.1 L1542.3 1624.1 L1556.6 1637.3 L1570.9 1635.6 L1585.2 1635.6 L1599.4 1634.4 L1613.7 1634.4 L1628.0 1636.5 L1642.2 1639.8 L1656.5 1638.5 L1670.8 1621.6 L1685.1 1635.6 L1699.3 1635.6 L1713.6 1637.3 L1727.9 1638.5 L1742.2 1638.5 L1756.5 1635.6 L1770.7 1635.6 L1785.0 1622.9 L1799.3 1634.4 L1813.6 1637.3 L1827.8 1631.1 L1842.1 1631.1 L1856.4 1634.4 L1870.7 1631.5 L1884.9 1631.1 L1899.2 1631.1 L1913.5 1631.1 L1927.8 1636.5 L1942.0 1636.5 L1956.3 1633.2 L1970.6 1668.2 L1984.8 1669.4 L1999.1 1669.8 L2013.4 1670.6 L2027.7 1670.6 L2042.0 1668.6 L2056.2 1668.6 L2070.5 1668.6" fill="none" stroke="#56a64b" stroke-width="2.4" stroke-linejoin="round"/><path d="M1214.0 1603.5 L1228.3 1572.6 L1242.5 1626.2 L1256.8 1585.8 L1271.1 1620.8 L1285.4 1577.6 L1299.7 1577.6 L1313.9 1468.5 L1328.2 1515.0 L1342.5 1609.7 L1356.8 1612.6 L1371.0 1572.6 L1385.3 1569.4 L1399.6 1592.0 L1413.8 1616.7 L1428.1 1572.6 L1442.4 1572.6 L1456.7 1517.1 L1471.0 1519.9 L1485.2 1576.8 L1499.5 1614.6 L1513.8 1615.9 L1528.0 1620.8 L1542.3 1578.8 L1556.6 1562.4 L1570.9 1589.9 L1585.2 1618.8 L1599.4 1618.8 L1613.7 1552.1 L1628.0 1577.6 L1642.2 1569.4 L1656.5 1616.7 L1670.8 1591.2 L1685.1 1626.2 L1699.3 1573.5 L1713.6 1596.1 L1727.9 1618.8 L1742.2 1618.8 L1756.5 1499.4 L1770.7 1585.8 L1785.0 1624.1 L1799.3 1600.2 L1813.6 1562.4 L1827.8 1627.0 L1842.1 1618.8 L1856.4 1567.3 L1870.7 1614.6 L1884.9 1614.6 L1899.2 1614.6 L1913.5 1526.1 L1927.8 1573.5 L1942.0 1609.7 L1956.3 1620.0 L1970.6 1585.0 L1984.8 1624.9 L1999.1 1608.5 L2013.4 1634.4 L2027.7 1571.4 L2042.0 1571.4 L2056.2 1457.4 L2070.5 1446.2" fill="none" stroke="#8ae2f5" stroke-width="2.4" stroke-linejoin="round"/></svg><div class="t" style="left:1158.65px;top:1368.70px;font-size:28px;color:#ccccdc;transform:scaleX(1.1233);transform-origin:0 0;-webkit-text-stroke:0.8px #ccccdc;">container</div><div class="t" style="left:1950.29px;top:1370.08px;font-size:24px;color:#ccccdc;transform:scaleX(1.1026);transform-origin:0 0;-webkit-text-stroke:0.8px #ccccdc;">Select</div><div class="t" style="left:1170.50px;top:1473.64px;font-size:25px;color:#ccccdc;-webkit-text-stroke:0.35px #ccccdc;">0.8</div><div class="t" style="left:1170.50px;top:1523.64px;font-size:25px;color:#ccccdc;-webkit-text-stroke:0.35px #ccccdc;">0.6</div><div class="t" style="left:1170.10px;top:1574.94px;font-size:25px;color:#ccccdc;-webkit-text-stroke:0.35px #ccccdc;">0.4</div><div class="t" style="left:1170.60px;top:1624.94px;font-size:25px;color:#ccccdc;-webkit-text-stroke:0.35px #ccccdc;">0.2</div><div class="a" style="left:0;top:0;width:2091.0px;height:2112px;overflow:hidden"><div class="t" style="left:1326.30px;top:1708.24px;font-size:25px;color:#ccccdc;-webkit-text-stroke:0.35px #ccccdc;">16:40</div><div class="t" style="left:1468.80px;top:1708.24px;font-size:25px;color:#ccccdc;-webkit-text-stroke:0.35px #ccccdc;">16:50</div><div class="t" style="left:1611.30px;top:1708.24px;font-size:25px;color:#ccccdc;-webkit-text-stroke:0.35px #ccccdc;">17:00</div><div class="t" style="left:1753.80px;top:1708.24px;font-size:25px;color:#ccccdc;-webkit-text-stroke:0.35px #ccccdc;">17:10</div><div class="t" style="left:1896.30px;top:1708.24px;font-size:25px;color:#ccccdc;-webkit-text-stroke:0.35px #ccccdc;">17:20</div><div class="t" style="left:2038.80px;top:1708.24px;font-size:25px;color:#ccccdc;-webkit-text-stroke:0.35px #ccccdc;">17:30</div></div><svg class="a" style="left:0;top:0" width="3248" height="2112"><rect x="2124.7" y="1349.4" width="961.5" height="396.3" rx="4" fill="#1a1c20" stroke="#303137" stroke-width="2"/><rect x="2918.7" y="1359.4" width="102.8" height="45.6" rx="4" fill="#2a2b30" stroke="#3a3b40" stroke-width="2"/><circle cx="3062.7" cy="1373.0" r="2.6" fill="#a6a7b0"/><circle cx="3062.7" cy="1382.0" r="2.6" fill="#a6a7b0"/><circle cx="3062.7" cy="1391.0" r="2.6" fill="#a6a7b0"/><line x1="2194.8999999999996" y1="1486.2" x2="3052.2" y2="1486.2" stroke="#36373c" stroke-width="1.1"/><line x1="2194.8999999999996" y1="1536.2" x2="3052.2" y2="1536.2" stroke="#36373c" stroke-width="1.1"/><line x1="2194.8999999999996" y1="1587.5" x2="3052.2" y2="1587.5" stroke="#36373c" stroke-width="1.1"/><line x1="2194.8999999999996" y1="1637.5" x2="3052.2" y2="1637.5" stroke="#36373c" stroke-width="1.1"/><line x1="2339.7" y1="1447.0" x2="2339.7" y2="1697.0" stroke="#36373c" stroke-width="1.1"/><line x1="2482.2" y1="1447.0" x2="2482.2" y2="1697.0" stroke="#36373c" stroke-width="1.1"/><line x1="2624.7" y1="1447.0" x2="2624.7" y2="1697.0" stroke="#36373c" stroke-width="1.1"/><line x1="2767.2" y1="1447.0" x2="2767.2" y2="1697.0" stroke="#36373c" stroke-width="1.1"/><line x1="2909.7" y1="1447.0" x2="2909.7" y2="1697.0" stroke="#36373c" stroke-width="1.1"/><line x1="3052.2" y1="1447.0" x2="3052.2" y2="1697.0" stroke="#36373c" stroke-width="1.1"/><path d="M2194.9 1689.2 L2209.2 1689.2 L2223.5 1689.2 L2237.8 1689.2 L2252.1 1689.2 L2266.3 1689.2 L2280.6 1689.2 L2294.9 1689.2 L2309.2 1689.2 L2323.5 1689.2 L2337.8 1689.2 L2352.1 1689.2 L2366.4 1689.2 L2380.6 1689.2 L2394.9 1689.2 L2409.2 1689.2 L2423.5 1689.2 L2437.8 1689.2 L2452.1 1689.2 L2466.4 1689.2 L2480.7 1689.2 L2495.0 1689.2 L2509.2 1689.2 L2523.5 1689.2 L2537.8 1689.2 L2552.1 1689.2 L2566.4 1689.2 L2580.7 1689.2 L2595.0 1689.2 L2609.3 1689.2 L2623.5 1689.2 L2637.8 1689.2 L2652.1 1689.2 L2666.4 1689.2 L2680.7 1689.2 L2695.0 1689.2 L2709.3 1689.2 L2723.6 1689.2 L2737.9 1689.2 L2752.1 1689.2 L2766.4 1689.2 L2780.7 1689.2 L2795.0 1689.2 L2809.3 1689.2 L2823.6 1689.2 L2837.9 1689.2 L2852.2 1689.2 L2866.5 1689.2 L2880.7 1689.2 L2895.0 1689.2 L2909.3 1689.2 L2923.6 1689.2 L2937.9 1689.2 L2952.2 1689.2 L2966.5 1689.2 L2980.8 1689.2 L2995.0 1689.2 L3009.3 1689.2 L3023.6 1689.2 L3037.9 1689.2 L3052.2 1689.2" fill="none" stroke="#f08040" stroke-width="1.6" stroke-linejoin="round"/><path d="M2194.9 1687.6 L2209.2 1687.6 L2223.5 1687.6 L2237.8 1687.6 L2252.1 1687.6 L2266.3 1687.6 L2280.6 1687.6 L2294.9 1687.6 L2309.2 1687.6 L2323.5 1687.6 L2337.8 1687.6 L2352.1 1687.6 L2366.4 1687.6 L2380.6 1687.6 L2394.9 1687.6 L2409.2 1687.6 L2423.5 1687.6 L2437.8 1687.6 L2452.1 1687.6 L2466.4 1687.6 L2480.7 1687.6 L2495.0 1687.6 L2509.2 1687.6 L2523.5 1687.6 L2537.8 1687.6 L2552.1 1687.6 L2566.4 1687.6 L2580.7 1687.6 L2595.0 1687.6 L2609.3 1687.6 L2623.5 1687.6 L2637.8 1687.6 L2652.1 1687.6 L2666.4 1687.6 L2680.7 1687.6 L2695.0 1687.6 L2709.3 1687.6 L2723.6 1687.6 L2737.9 1687.6 L2752.1 1687.6 L2766.4 1687.6 L2780.7 1687.6 L2795.0 1687.6 L2809.3 1687.6 L2823.6 1687.6 L2837.9 1687.6 L2852.2 1687.6 L2866.5 1687.6 L2880.7 1687.6 L2895.0 1687.6 L2909.3 1687.6 L2923.6 1687.6 L2937.9 1687.6 L2952.2 1687.6 L2966.5 1687.6 L2980.8 1687.6 L2995.0 1687.6 L3009.3 1687.6 L3023.6 1687.6 L3037.9 1687.6 L3052.2 1687.6" fill="none" stroke="#e0505e" stroke-width="2.4" stroke-linejoin="round"/><path d="M2194.9 1685.4 L2209.2 1685.4 L2223.5 1685.4 L2237.8 1685.4 L2252.1 1685.4 L2266.3 1685.4 L2280.6 1685.4 L2294.9 1685.4 L2309.2 1685.4 L2323.5 1685.4 L2337.8 1685.4 L2352.1 1685.4 L2366.4 1685.4 L2380.6 1685.4 L2394.9 1685.4 L2409.2 1685.4 L2423.5 1685.4 L2437.8 1685.4 L2452.1 1685.4 L2466.4 1685.4 L2480.7 1685.4 L2495.0 1685.4 L2509.2 1685.4 L2523.5 1685.4 L2537.8 1685.4 L2552.1 1685.4 L2566.4 1685.4 L2580.7 1685.4 L2595.0 1685.4 L2609.3 1685.4 L2623.5 1685.4 L2637.8 1685.4 L2652.1 1685.4 L2666.4 1685.4 L2680.7 1685.4 L2695.0 1685.4 L2709.3 1685.4 L2723.6 1685.4 L2737.9 1685.4 L2752.1 1685.4 L2766.4 1685.4 L2780.7 1685.4 L2795.0 1685.4 L2809.3 1685.4 L2823.6 1685.4 L2837.9 1685.4 L2852.2 1685.4 L2866.5 1685.4 L2880.7 1685.4 L2895.0 1685.4 L2909.3 1685.4 L2923.6 1685.4 L2937.9 1685.4 L2952.2 1685.4 L2966.5 1685.4 L2980.8 1685.4 L2995.0 1685.4 L3009.3 1685.4 L3023.6 1685.4 L3037.9 1685.4 L3052.2 1685.4" fill="none" stroke="#b877d9" stroke-width="2.4" stroke-linejoin="round"/><path d="M2194.9 1683.3 L2209.2 1683.3 L2223.5 1683.3 L2237.8 1683.3 L2252.1 1683.3 L2266.3 1683.3 L2280.6 1683.3 L2294.9 1683.3 L2309.2 1683.3 L2323.5 1683.3 L2337.8 1683.3 L2352.1 1683.3 L2366.4 1683.3 L2380.6 1683.3 L2394.9 1683.3 L2409.2 1683.3 L2423.5 1683.3 L2437.8 1683.3 L2452.1 1683.3 L2466.4 1683.3 L2480.7 1683.3 L2495.0 1683.3 L2509.2 1683.3 L2523.5 1683.3 L2537.8 1683.3 L2552.1 1683.3 L2566.4 1683.3 L2580.7 1683.3 L2595.0 1683.3 L2609.3 1683.3 L2623.5 1683.3 L2637.8 1683.3 L2652.1 1683.3 L2666.4 1683.3 L2680.7 1683.3 L2695.0 1683.3 L2709.3 1683.3 L2723.6 1683.3 L2737.9 1683.3 L2752.1 1683.3 L2766.4 1683.3 L2780.7 1683.3 L2795.0 1683.3 L2809.3 1683.3 L2823.6 1683.3 L2837.9 1683.3 L2852.2 1683.3 L2866.5 1683.3 L2880.7 1683.3 L2895.0 1683.3 L2909.3 1683.3 L2923.6 1683.3 L2937.9 1683.3 L2952.2 1683.3 L2966.5 1683.3 L2980.8 1683.3 L2995.0 1683.3 L3009.3 1683.3 L3023.6 1683.3 L3037.9 1683.3 L3052.2 1683.3" fill="none" stroke="#6a9cf0" stroke-width="2.4" stroke-linejoin="round"/><path d="M2194.9 1681.4 L2209.2 1679.8 L2223.5 1682.7 L2237.8 1680.6 L2252.1 1681.4 L2266.3 1680.6 L2280.6 1680.6 L2294.9 1675.6 L2309.2 1677.7 L2323.5 1681.9 L2337.8 1681.9 L2352.1 1679.3 L2366.4 1679.3 L2380.6 1680.6 L2394.9 1681.9 L2409.2 1680.6 L2423.5 1679.8 L2437.8 1678.5 L2452.1 1678.5 L2466.4 1680.6 L2480.7 1681.9 L2495.0 1681.9 L2509.2 1681.9 L2523.5 1680.6 L2537.8 1679.8 L2552.1 1680.6 L2566.4 1681.9 L2580.7 1681.9 L2595.0 1679.8 L2609.3 1680.6 L2623.5 1679.8 L2637.8 1681.9 L2652.1 1680.6 L2666.4 1682.7 L2680.7 1680.6 L2695.0 1680.6 L2709.3 1681.9 L2723.6 1681.9 L2737.9 1677.2 L2752.1 1680.6 L2766.4 1682.7 L2780.7 1681.9 L2795.0 1679.8 L2809.3 1682.7 L2823.6 1681.9 L2837.9 1679.8 L2852.2 1681.9 L2866.5 1681.9 L2880.7 1681.9 L2895.0 1678.5 L2909.3 1679.8 L2923.6 1681.9 L2937.9 1682.7 L2952.2 1680.6 L2966.5 1682.7 L2980.8 1681.4 L2995.0 1682.7 L3009.3 1679.8 L3023.6 1680.6 L3037.9 1675.6 L3052.2 1674.7" fill="none" stroke="#84c079" stroke-width="2.5" stroke-linejoin="round"/></svg><div class="t" style="left:2139.61px;top:1368.70px;font-size:28px;color:#ccccdc;transform:scaleX(1.1025);transform-origin:0 0;-webkit-text-stroke:0.8px #ccccdc;">namespace</div><div class="t" style="left:2931.99px;top:1370.08px;font-size:24px;color:#ccccdc;transform:scaleX(1.1026);transform-origin:0 0;-webkit-text-stroke:0.8px #ccccdc;">Select</div><div class="t" style="left:2152.20px;top:1473.64px;font-size:25px;color:#ccccdc;-webkit-text-stroke:0.35px #ccccdc;">0.8</div><div class="t" style="left:2152.20px;top:1523.64px;font-size:25px;color:#ccccdc;-webkit-text-stroke:0.35px #ccccdc;">0.6</div><div class="t" style="left:2151.80px;top:1574.94px;font-size:25px;color:#ccccdc;-webkit-text-stroke:0.35px #ccccdc;">0.4</div><div class="t" style="left:2152.30px;top:1624.94px;font-size:25px;color:#ccccdc;-webkit-text-stroke:0.35px #ccccdc;">0.2</div><div class="a" style="left:0;top:0;width:3072.7px;height:2112px;overflow:hidden"><div class="t" style="left:2308.00px;top:1708.24px;font-size:25px;color:#ccccdc;-webkit-text-stroke:0.35px #ccccdc;">16:40</div><div class="t" style="left:2450.50px;top:1708.24px;font-size:25px;color:#ccccdc;-webkit-text-stroke:0.35px #ccccdc;">16:50</div><div class="t" style="left:2593.00px;top:1708.24px;font-size:25px;color:#ccccdc;-webkit-text-stroke:0.35px #ccccdc;">17:00</div><div class="t" style="left:2735.50px;top:1708.24px;font-size:25px;color:#ccccdc;-webkit-text-stroke:0.35px #ccccdc;">17:10</div><div class="t" style="left:2878.00px;top:1708.24px;font-size:25px;color:#ccccdc;-webkit-text-stroke:0.35px #ccccdc;">17:20</div><div class="t" style="left:3020.50px;top:1708.24px;font-size:25px;color:#ccccdc;-webkit-text-stroke:0.35px #ccccdc;">17:30</div></div><svg class="a" style="left:0;top:0" width="3248" height="2112"><rect x="161.5" y="1765.7" width="961.5" height="396.3" rx="4" fill="#1a1c20" stroke="#303137" stroke-width="2"/><rect x="955.5" y="1775.7" width="102.8" height="45.6" rx="4" fill="#2a2b30" stroke="#3a3b40" stroke-width="2"/><circle cx="1099.5" cy="1789.3" r="2.6" fill="#a6a7b0"/><circle cx="1099.5" cy="1798.3" r="2.6" fill="#a6a7b0"/><circle cx="1099.5" cy="1807.3" r="2.6" fill="#a6a7b0"/><line x1="234.0" y1="1902.5" x2="1089.0" y2="1902.5" stroke="#36373c" stroke-width="1.1"/><line x1="234.0" y1="1952.5" x2="1089.0" y2="1952.5" stroke="#36373c" stroke-width="1.1"/><line x1="234.0" y1="2003.8" x2="1089.0" y2="2003.8" stroke="#36373c" stroke-width="1.1"/><line x1="234.0" y1="2053.8" x2="1089.0" y2="2053.8" stroke="#36373c" stroke-width="1.1"/><line x1="376.5" y1="1863.3" x2="376.5" y2="2113.3" stroke="#36373c" stroke-width="1.1"/><line x1="519.0" y1="1863.3" x2="519.0" y2="2113.3" stroke="#36373c" stroke-width="1.1"/><line x1="661.5" y1="1863.3" x2="661.5" y2="2113.3" stroke="#36373c" stroke-width="1.1"/><line x1="804.0" y1="1863.3" x2="804.0" y2="2113.3" stroke="#36373c" stroke-width="1.1"/><line x1="946.5" y1="1863.3" x2="946.5" y2="2113.3" stroke="#36373c" stroke-width="1.1"/><line x1="1089.0" y1="1863.3" x2="1089.0" y2="2113.3" stroke="#36373c" stroke-width="1.1"/><path d="M234.0 2098.7 L248.2 2097.1 L262.5 2100.0 L276.8 2097.9 L291.0 2098.7 L305.2 2097.9 L319.5 2097.9 L333.8 2092.9 L348.0 2095.0 L362.2 2099.2 L376.5 2099.2 L390.8 2096.6 L405.0 2096.6 L419.2 2097.9 L433.5 2099.2 L447.8 2097.9 L462.0 2097.1 L476.2 2095.8 L490.5 2095.8 L504.8 2097.9 L519.0 2099.2 L533.2 2099.2 L547.5 2099.2 L561.8 2097.9 L576.0 2097.1 L590.2 2097.9 L604.5 2099.2 L618.8 2099.2 L633.0 2097.1 L647.2 2097.9 L661.5 2097.1 L675.8 2099.2 L690.0 2097.9 L704.2 2100.0 L718.5 2097.9 L732.8 2097.9 L747.0 2099.2 L761.2 2099.2 L775.5 2094.5 L789.8 2097.9 L804.0 2100.0 L818.2 2099.2 L832.5 2097.1 L846.8 2100.0 L861.0 2099.2 L875.2 2097.1 L889.5 2099.2 L903.8 2099.2 L918.0 2099.2 L932.2 2095.8 L946.5 2097.1 L960.8 2099.2 L975.0 2100.0 L989.2 2097.9 L1003.5 2100.0 L1017.8 2098.7 L1032.0 2100.0 L1046.2 2097.1 L1060.5 2097.9 L1074.8 2092.9 L1089.0 2092.0" fill="none" stroke="#84c079" stroke-width="2.5" stroke-linejoin="round"/></svg><div class="t" style="left:176.32px;top:1785.00px;font-size:28px;color:#ccccdc;transform:scaleX(1.1475);transform-origin:0 0;-webkit-text-stroke:0.8px #ccccdc;">node</div><div class="t" style="left:968.79px;top:1786.38px;font-size:24px;color:#ccccdc;transform:scaleX(1.1026);transform-origin:0 0;-webkit-text-stroke:0.8px #ccccdc;">Select</div><div class="t" style="left:189.00px;top:1889.94px;font-size:25px;color:#ccccdc;-webkit-text-stroke:0.35px #ccccdc;">0.8</div><div class="t" style="left:189.00px;top:1939.94px;font-size:25px;color:#ccccdc;-webkit-text-stroke:0.35px #ccccdc;">0.6</div><div class="t" style="left:188.60px;top:1991.24px;font-size:25px;color:#ccccdc;-webkit-text-stroke:0.35px #ccccdc;">0.4</div><div class="t" style="left:189.10px;top:2041.24px;font-size:25px;color:#ccccdc;-webkit-text-stroke:0.35px #ccccdc;">0.2</div><div class="a" style="left:0;top:0;width:1109.5px;height:2112px;overflow:hidden"><div class="t" style="left:344.80px;top:2124.54px;font-size:25px;color:#ccccdc;-webkit-text-stroke:0.35px #ccccdc;">16:40</div><div class="t" style="left:487.30px;top:2124.54px;font-size:25px;color:#ccccdc;-webkit-text-stroke:0.35px #ccccdc;">16:50</div><div class="t" style="left:629.80px;top:2124.54px;font-size:25px;color:#ccccdc;-webkit-text-stroke:0.35px #ccccdc;">17:00</div><div class="t" style="left:772.30px;top:2124.54px;font-size:25px;color:#ccccdc;-webkit-text-stroke:0.35px #ccccdc;">17:10</div><div class="t" style="left:914.80px;top:2124.54px;font-size:25px;color:#ccccdc;-webkit-text-stroke:0.35px #ccccdc;">17:20</div><div class="t" style="left:1057.30px;top:2124.54px;font-size:25px;color:#ccccdc;-webkit-text-stroke:0.35px #ccccdc;">17:30</div></div><svg class="a" style="left:0;top:0" width="3248" height="2112"><rect x="1143" y="1765.7" width="961.5" height="396.3" rx="4" fill="#1a1c20" stroke="#303137" stroke-width="2"/><rect x="1937" y="1775.7" width="102.8" height="45.6" rx="4" fill="#2a2b30" stroke="#3a3b40" stroke-width="2"/><circle cx="2081" cy="1789.3" r="2.6" fill="#a6a7b0"/><circle cx="2081" cy="1798.3" r="2.6" fill="#a6a7b0"/><circle cx="2081" cy="1807.3" r="2.6" fill="#a6a7b0"/><line x1="1214" y1="1902.5" x2="2070.5" y2="1902.5" stroke="#36373c" stroke-width="1.1"/><line x1="1214" y1="1952.5" x2="2070.5" y2="1952.5" stroke="#36373c" stroke-width="1.1"/><line x1="1214" y1="2003.8" x2="2070.5" y2="2003.8" stroke="#36373c" stroke-width="1.1"/><line x1="1214" y1="2053.8" x2="2070.5" y2="2053.8" stroke="#36373c" stroke-width="1.1"/><line x1="1358.0" y1="1863.3" x2="1358.0" y2="2113.3" stroke="#36373c" stroke-width="1.1"/><line x1="1500.5" y1="1863.3" x2="1500.5" y2="2113.3" stroke="#36373c" stroke-width="1.1"/><line x1="1643.0" y1="1863.3" x2="1643.0" y2="2113.3" stroke="#36373c" stroke-width="1.1"/><line x1="1785.5" y1="1863.3" x2="1785.5" y2="2113.3" stroke="#36373c" stroke-width="1.1"/><line x1="1928.0" y1="1863.3" x2="1928.0" y2="2113.3" stroke="#36373c" stroke-width="1.1"/><line x1="2070.5" y1="1863.3" x2="2070.5" y2="2113.3" stroke="#36373c" stroke-width="1.1"/><path d="M1214.0 2019.8 L1228.3 1988.9 L1242.5 2042.5 L1256.8 2002.1 L1271.1 2037.1 L1285.4 1993.9 L1299.7 1993.9 L1313.9 1884.8 L1328.2 1931.3 L1342.5 2026.0 L1356.8 2028.9 L1371.0 1988.9 L1385.3 1985.7 L1399.6 2008.3 L1413.8 2033.0 L1428.1 1988.9 L1442.4 1988.9 L1456.7 1933.4 L1471.0 1936.2 L1485.2 1993.1 L1499.5 2030.9 L1513.8 2032.2 L1528.0 2037.1 L1542.3 1995.1 L1556.6 1978.7 L1570.9 2006.2 L1585.2 2035.1 L1599.4 2035.1 L1613.7 1968.4 L1628.0 1993.9 L1642.2 1985.7 L1656.5 2033.0 L1670.8 2007.5 L1685.1 2042.5 L1699.3 1989.8 L1713.6 2012.4 L1727.9 2035.1 L1742.2 2035.1 L1756.5 1915.7 L1770.7 2002.1 L1785.0 2040.4 L1799.3 2016.5 L1813.6 1978.7 L1827.8 2043.3 L1842.1 2035.1 L1856.4 1983.6 L1870.7 2030.9 L1884.9 2030.9 L1899.2 2030.9 L1913.5 1942.4 L1927.8 1989.8 L1942.0 2026.0 L1956.3 2036.3 L1970.6 2001.3 L1984.8 2041.2 L1999.1 2024.8 L2013.4 2050.7 L2027.7 1987.7 L2042.0 1987.7 L2056.2 1873.7 L2070.5 1862.5" fill="none" stroke="#f2b57d" stroke-width="2.4" stroke-linejoin="round"/></svg><div class="t" style="left:1157.85px;top:1785.00px;font-size:28px;color:#ccccdc;transform:scaleX(1.1930);transform-origin:0 0;-webkit-text-stroke:0.8px #ccccdc;">pod</div><div class="t" style="left:1950.29px;top:1786.38px;font-size:24px;color:#ccccdc;transform:scaleX(1.1026);transform-origin:0 0;-webkit-text-stroke:0.8px #ccccdc;">Select</div><div class="t" style="left:1170.50px;top:1889.94px;font-size:25px;color:#ccccdc;-webkit-text-stroke:0.35px #ccccdc;">0.8</div><div class="t" style="left:1170.50px;top:1939.94px;font-size:25px;color:#ccccdc;-webkit-text-stroke:0.35px #ccccdc;">0.6</div><div class="t" style="left:1170.10px;top:1991.24px;font-size:25px;color:#ccccdc;-webkit-text-stroke:0.35px #ccccdc;">0.4</div><div class="t" style="left:1170.60px;top:2041.24px;font-size:25px;color:#ccccdc;-webkit-text-stroke:0.35px #ccccdc;">0.2</div><div class="a" style="left:0;top:0;width:2091.0px;height:2112px;overflow:hidden"><div class="t" style="left:1326.30px;top:2124.54px;font-size:25px;color:#ccccdc;-webkit-text-stroke:0.35px #ccccdc;">16:40</div><div class="t" style="left:1468.80px;top:2124.54px;font-size:25px;color:#ccccdc;-webkit-text-stroke:0.35px #ccccdc;">16:50</div><div class="t" style="left:1611.30px;top:2124.54px;font-size:25px;color:#ccccdc;-webkit-text-stroke:0.35px #ccccdc;">17:00</div><div class="t" style="left:1753.80px;top:2124.54px;font-size:25px;color:#ccccdc;-webkit-text-stroke:0.35px #ccccdc;">17:10</div><div class="t" style="left:1896.30px;top:2124.54px;font-size:25px;color:#ccccdc;-webkit-text-stroke:0.35px #ccccdc;">17:20</div><div class="t" style="left:2038.80px;top:2124.54px;font-size:25px;color:#ccccdc;-webkit-text-stroke:0.35px #ccccdc;">17:30</div></div></div></div><div class="a" style="left:112px;top:75px;width:3025px;height:1889px;border-radius:21px;border:2px solid rgba(255,255,255,0.26);border-top-color:rgba(255,255,255,0.42)"></div></body></html>
